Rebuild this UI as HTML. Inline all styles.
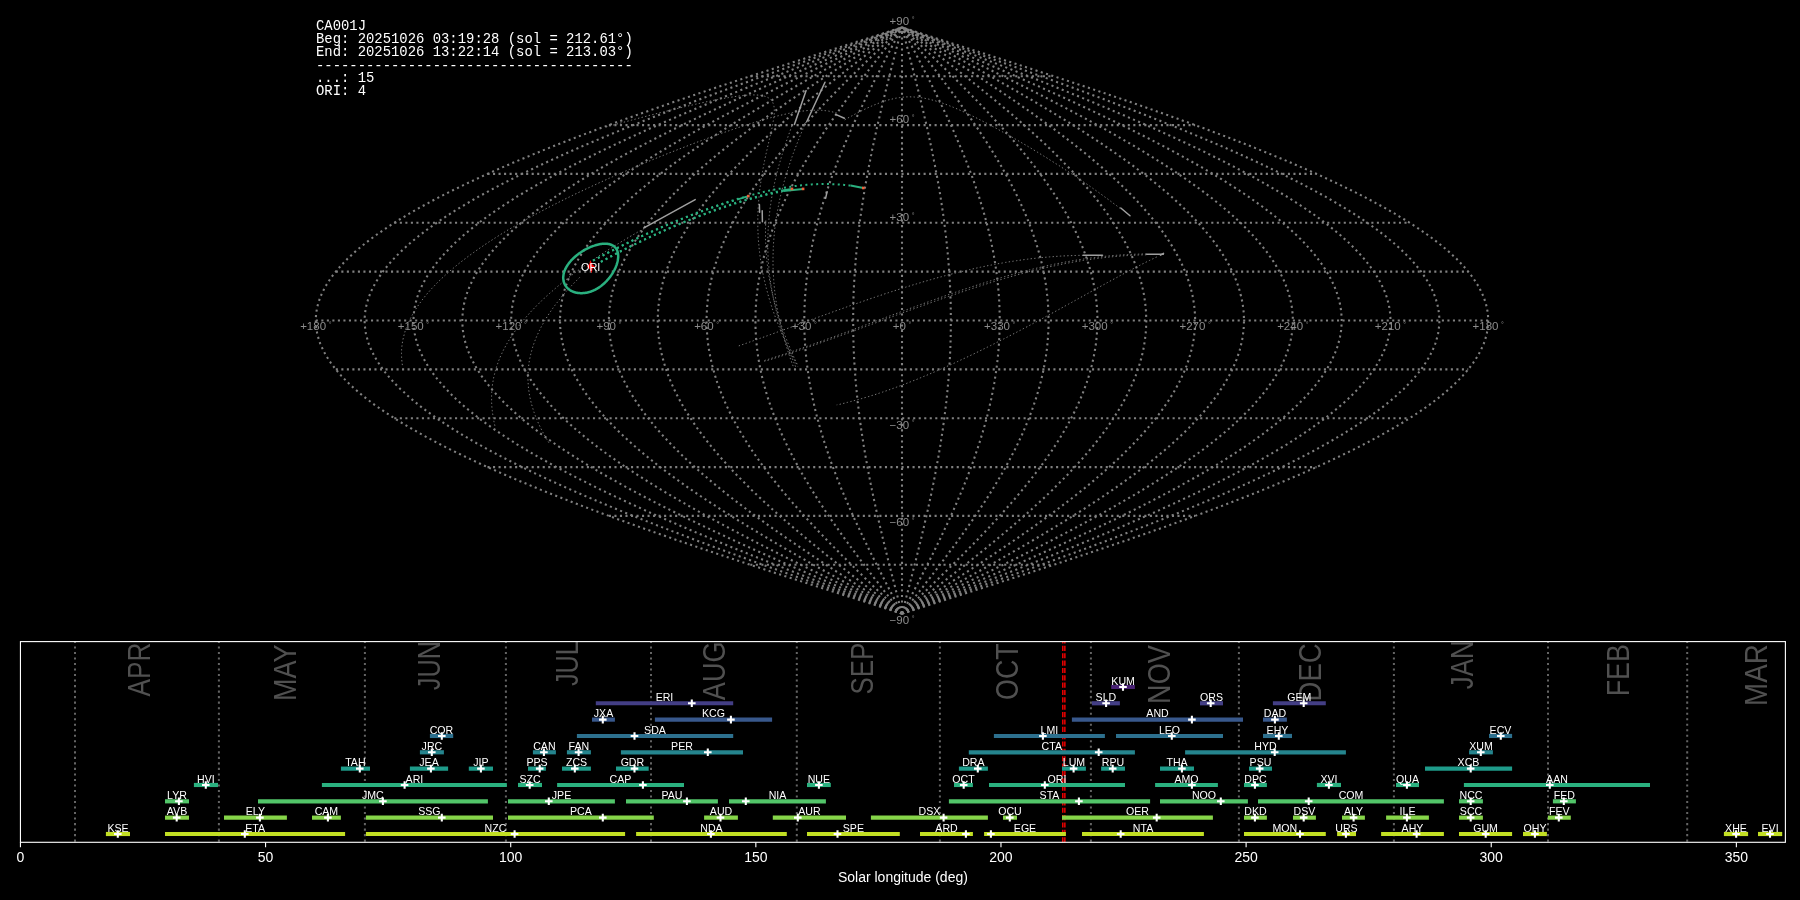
<!DOCTYPE html>
<html><head><meta charset="utf-8"><title>CA001J</title>
<style>html,body{margin:0;padding:0;background:#000;width:1800px;height:900px;overflow:hidden}svg{display:block;will-change:transform}</style>
</head><body><svg width="1800" height="900" viewBox="0 0 1800 900"><g fill="none" stroke="#808080" stroke-width="2.08" stroke-dasharray="2.08 3.44"><path d="M902.0,613.6 912.2,610.4 922.5,607.1 932.7,603.8 942.9,600.6 953.1,597.3 963.3,594.1 973.4,590.8 983.6,587.6 993.7,584.3 1003.8,581.0 1013.9,577.8 1023.9,574.5 1033.9,571.3 1043.8,568.0 1053.7,564.8 1063.6,561.5 1073.4,558.2 1083.2,555.0 1092.9,551.7 1102.5,548.5 1112.1,545.2 1121.6,542.0 1131.1,538.7 1140.4,535.4 1149.7,532.2 1159.0,528.9 1168.1,525.7 1177.2,522.4 1186.2,519.2 1195.1,515.9 1203.9,512.7 1212.6,509.4 1221.3,506.1 1229.8,502.9 1238.2,499.6 1246.6,496.4 1254.8,493.1 1262.9,489.9 1270.9,486.6 1278.8,483.3 1286.6,480.1 1294.3,476.8 1301.8,473.6 1309.2,470.3 1316.5,467.1 1323.7,463.8 1330.7,460.5 1337.6,457.3 1344.4,454.0 1351.1,450.8 1357.6,447.5 1363.9,444.3 1370.2,441.0 1376.3,437.7 1382.2,434.5 1388.0,431.2 1393.6,428.0 1399.1,424.7 1404.5,421.5 1409.7,418.2 1414.7,414.9 1419.6,411.7 1424.3,408.4 1428.9,405.2 1433.3,401.9 1437.5,398.7 1441.6,395.4 1445.5,392.1 1449.3,388.9 1452.9,385.6 1456.3,382.4 1459.5,379.1 1462.6,375.9 1465.5,372.6 1468.2,369.4 1470.8,366.1 1473.2,362.8 1475.4,359.6 1477.5,356.3 1479.3,353.1 1481.0,349.8 1482.5,346.6 1483.9,343.3 1485.0,340.0 1486.0,336.8 1486.8,333.5 1487.4,330.3 1487.9,327.0 1488.1,323.8 1488.2,320.5 1488.1,317.2 1487.9,314.0 1487.4,310.7 1486.8,307.5 1486.0,304.2 1485.0,301.0 1483.9,297.7 1482.5,294.4 1481.0,291.2 1479.3,287.9 1477.5,284.7 1475.4,281.4 1473.2,278.2 1470.8,274.9 1468.2,271.6 1465.5,268.4 1462.6,265.1 1459.5,261.9 1456.3,258.6 1452.9,255.4 1449.3,252.1 1445.5,248.9 1441.6,245.6 1437.5,242.3 1433.3,239.1 1428.9,235.8 1424.3,232.6 1419.6,229.3 1414.7,226.1 1409.7,222.8 1404.5,219.5 1399.1,216.3 1393.6,213.0 1388.0,209.8 1382.2,206.5 1376.3,203.3 1370.2,200.0 1363.9,196.7 1357.6,193.5 1351.1,190.2 1344.4,187.0 1337.6,183.7 1330.7,180.5 1323.7,177.2 1316.5,173.9 1309.2,170.7 1301.8,167.4 1294.3,164.2 1286.6,160.9 1278.8,157.7 1270.9,154.4 1262.9,151.1 1254.8,147.9 1246.6,144.6 1238.2,141.4 1229.8,138.1 1221.3,134.9 1212.6,131.6 1203.9,128.3 1195.1,125.1 1186.2,121.8 1177.2,118.6 1168.1,115.3 1159.0,112.1 1149.7,108.8 1140.4,105.6 1131.1,102.3 1121.6,99.0 1112.1,95.8 1102.5,92.5 1092.9,89.3 1083.2,86.0 1073.4,82.8 1063.6,79.5 1053.7,76.2 1043.8,73.0 1033.9,69.7 1023.9,66.5 1013.9,63.2 1003.8,60.0 993.7,56.7 983.6,53.4 973.4,50.2 963.3,46.9 953.1,43.7 942.9,40.4 932.7,37.2 922.5,33.9 912.2,30.6 902.0,27.4"/><path d="M902.0,613.6 911.4,610.4 920.8,607.1 930.1,603.8 939.5,600.6 948.8,597.3 958.2,594.1 967.5,590.8 976.8,587.6 986.1,584.3 995.3,581.0 1004.5,577.8 1013.7,574.5 1022.9,571.3 1032.0,568.0 1041.1,564.8 1050.1,561.5 1059.1,558.2 1068.1,555.0 1077.0,551.7 1085.8,548.5 1094.6,545.2 1103.3,542.0 1112.0,538.7 1120.6,535.4 1129.1,532.2 1137.6,528.9 1146.0,525.7 1154.3,522.4 1162.5,519.2 1170.7,515.9 1178.8,512.7 1186.8,509.4 1194.7,506.1 1202.5,502.9 1210.2,499.6 1217.9,496.4 1225.4,493.1 1232.8,489.9 1240.2,486.6 1247.4,483.3 1254.5,480.1 1261.6,476.8 1268.5,473.6 1275.3,470.3 1282.0,467.1 1288.6,463.8 1295.0,460.5 1301.3,457.3 1307.6,454.0 1313.6,450.8 1319.6,447.5 1325.5,444.3 1331.2,441.0 1336.7,437.7 1342.2,434.5 1347.5,431.2 1352.7,428.0 1357.7,424.7 1362.6,421.5 1367.4,418.2 1372.0,414.9 1376.5,411.7 1380.8,408.4 1385.0,405.2 1389.0,401.9 1392.9,398.7 1396.7,395.4 1400.2,392.1 1403.7,388.9 1407.0,385.6 1410.1,382.4 1413.1,379.1 1415.9,375.9 1418.6,372.6 1421.1,369.4 1423.4,366.1 1425.6,362.8 1427.6,359.6 1429.5,356.3 1431.2,353.1 1432.8,349.8 1434.1,346.6 1435.4,343.3 1436.4,340.0 1437.3,336.8 1438.1,333.5 1438.6,330.3 1439.0,327.0 1439.3,323.8 1439.4,320.5 1439.3,317.2 1439.0,314.0 1438.6,310.7 1438.1,307.5 1437.3,304.2 1436.4,301.0 1435.4,297.7 1434.1,294.4 1432.8,291.2 1431.2,287.9 1429.5,284.7 1427.6,281.4 1425.6,278.2 1423.4,274.9 1421.1,271.6 1418.6,268.4 1415.9,265.1 1413.1,261.9 1410.1,258.6 1407.0,255.4 1403.7,252.1 1400.2,248.9 1396.7,245.6 1392.9,242.3 1389.0,239.1 1385.0,235.8 1380.8,232.6 1376.5,229.3 1372.0,226.1 1367.4,222.8 1362.6,219.5 1357.7,216.3 1352.7,213.0 1347.5,209.8 1342.2,206.5 1336.7,203.3 1331.2,200.0 1325.5,196.7 1319.6,193.5 1313.6,190.2 1307.6,187.0 1301.3,183.7 1295.0,180.5 1288.6,177.2 1282.0,173.9 1275.3,170.7 1268.5,167.4 1261.6,164.2 1254.5,160.9 1247.4,157.7 1240.2,154.4 1232.8,151.1 1225.4,147.9 1217.9,144.6 1210.2,141.4 1202.5,138.1 1194.7,134.9 1186.8,131.6 1178.8,128.3 1170.7,125.1 1162.5,121.8 1154.3,118.6 1146.0,115.3 1137.6,112.1 1129.1,108.8 1120.6,105.6 1112.0,102.3 1103.3,99.0 1094.6,95.8 1085.8,92.5 1077.0,89.3 1068.1,86.0 1059.1,82.8 1050.1,79.5 1041.1,76.2 1032.0,73.0 1022.9,69.7 1013.7,66.5 1004.5,63.2 995.3,60.0 986.1,56.7 976.8,53.4 967.5,50.2 958.2,46.9 948.8,43.7 939.5,40.4 930.1,37.2 920.8,33.9 911.4,30.6 902.0,27.4"/><path d="M902.0,613.6 910.5,610.4 919.0,607.1 927.6,603.8 936.1,600.6 944.6,597.3 953.1,594.1 961.5,590.8 970.0,587.6 978.4,584.3 986.8,581.0 995.2,577.8 1003.6,574.5 1011.9,571.3 1020.2,568.0 1028.4,564.8 1036.7,561.5 1044.8,558.2 1053.0,555.0 1061.0,551.7 1069.1,548.5 1077.1,545.2 1085.0,542.0 1092.9,538.7 1100.7,535.4 1108.5,532.2 1116.2,528.9 1123.8,525.7 1131.3,522.4 1138.8,519.2 1146.3,515.9 1153.6,512.7 1160.9,509.4 1168.1,506.1 1175.2,502.9 1182.2,499.6 1189.1,496.4 1196.0,493.1 1202.8,489.9 1209.4,486.6 1216.0,483.3 1222.5,480.1 1228.9,476.8 1235.2,473.6 1241.4,470.3 1247.4,467.1 1253.4,463.8 1259.3,460.5 1265.0,457.3 1270.7,454.0 1276.2,450.8 1281.6,447.5 1287.0,444.3 1292.1,441.0 1297.2,437.7 1302.2,434.5 1307.0,431.2 1311.7,428.0 1316.3,424.7 1320.7,421.5 1325.1,418.2 1329.3,414.9 1333.3,411.7 1337.3,408.4 1341.1,405.2 1344.7,401.9 1348.3,398.7 1351.7,395.4 1354.9,392.1 1358.1,388.9 1361.1,385.6 1363.9,382.4 1366.6,379.1 1369.2,375.9 1371.6,372.6 1373.9,369.4 1376.0,366.1 1378.0,362.8 1379.8,359.6 1381.5,356.3 1383.1,353.1 1384.5,349.8 1385.8,346.6 1386.9,343.3 1387.8,340.0 1388.7,336.8 1389.3,333.5 1389.8,330.3 1390.2,327.0 1390.4,323.8 1390.5,320.5 1390.4,317.2 1390.2,314.0 1389.8,310.7 1389.3,307.5 1388.7,304.2 1387.8,301.0 1386.9,297.7 1385.8,294.4 1384.5,291.2 1383.1,287.9 1381.5,284.7 1379.8,281.4 1378.0,278.2 1376.0,274.9 1373.9,271.6 1371.6,268.4 1369.2,265.1 1366.6,261.9 1363.9,258.6 1361.1,255.4 1358.1,252.1 1354.9,248.9 1351.7,245.6 1348.3,242.3 1344.7,239.1 1341.1,235.8 1337.3,232.6 1333.3,229.3 1329.3,226.1 1325.1,222.8 1320.7,219.5 1316.3,216.3 1311.7,213.0 1307.0,209.8 1302.2,206.5 1297.2,203.3 1292.1,200.0 1287.0,196.7 1281.6,193.5 1276.2,190.2 1270.7,187.0 1265.0,183.7 1259.3,180.5 1253.4,177.2 1247.4,173.9 1241.4,170.7 1235.2,167.4 1228.9,164.2 1222.5,160.9 1216.0,157.7 1209.4,154.4 1202.8,151.1 1196.0,147.9 1189.1,144.6 1182.2,141.4 1175.2,138.1 1168.1,134.9 1160.9,131.6 1153.6,128.3 1146.3,125.1 1138.8,121.8 1131.3,118.6 1123.8,115.3 1116.2,112.1 1108.5,108.8 1100.7,105.6 1092.9,102.3 1085.0,99.0 1077.1,95.8 1069.1,92.5 1061.0,89.3 1053.0,86.0 1044.8,82.8 1036.7,79.5 1028.4,76.2 1020.2,73.0 1011.9,69.7 1003.6,66.5 995.2,63.2 986.8,60.0 978.4,56.7 970.0,53.4 961.5,50.2 953.1,46.9 944.6,43.7 936.1,40.4 927.6,37.2 919.0,33.9 910.5,30.6 902.0,27.4"/><path d="M902.0,613.6 909.7,610.4 917.3,607.1 925.0,603.8 932.7,600.6 940.3,597.3 948.0,594.1 955.6,590.8 963.2,587.6 970.8,584.3 978.3,581.0 985.9,577.8 993.4,574.5 1000.9,571.3 1008.4,568.0 1015.8,564.8 1023.2,561.5 1030.5,558.2 1037.9,555.0 1045.1,551.7 1052.4,548.5 1059.6,545.2 1066.7,542.0 1073.8,538.7 1080.8,535.4 1087.8,532.2 1094.7,528.9 1101.6,525.7 1108.4,522.4 1115.2,519.2 1121.8,515.9 1128.4,512.7 1135.0,509.4 1141.5,506.1 1147.9,502.9 1154.2,499.6 1160.4,496.4 1166.6,493.1 1172.7,489.9 1178.7,486.6 1184.6,483.3 1190.4,480.1 1196.2,476.8 1201.9,473.6 1207.4,470.3 1212.9,467.1 1218.3,463.8 1223.6,460.5 1228.7,457.3 1233.8,454.0 1238.8,450.8 1243.7,447.5 1248.5,444.3 1253.1,441.0 1257.7,437.7 1262.2,434.5 1266.5,431.2 1270.7,428.0 1274.9,424.7 1278.9,421.5 1282.8,418.2 1286.5,414.9 1290.2,411.7 1293.7,408.4 1297.2,405.2 1300.5,401.9 1303.7,398.7 1306.7,395.4 1309.7,392.1 1312.5,388.9 1315.2,385.6 1317.7,382.4 1320.1,379.1 1322.5,375.9 1324.6,372.6 1326.7,369.4 1328.6,366.1 1330.4,362.8 1332.1,359.6 1333.6,356.3 1335.0,353.1 1336.3,349.8 1337.4,346.6 1338.4,343.3 1339.3,340.0 1340.0,336.8 1340.6,333.5 1341.1,330.3 1341.4,327.0 1341.6,323.8 1341.7,320.5 1341.6,317.2 1341.4,314.0 1341.1,310.7 1340.6,307.5 1340.0,304.2 1339.3,301.0 1338.4,297.7 1337.4,294.4 1336.3,291.2 1335.0,287.9 1333.6,284.7 1332.1,281.4 1330.4,278.2 1328.6,274.9 1326.7,271.6 1324.6,268.4 1322.5,265.1 1320.1,261.9 1317.7,258.6 1315.2,255.4 1312.5,252.1 1309.7,248.9 1306.7,245.6 1303.7,242.3 1300.5,239.1 1297.2,235.8 1293.7,232.6 1290.2,229.3 1286.5,226.1 1282.8,222.8 1278.9,219.5 1274.9,216.3 1270.7,213.0 1266.5,209.8 1262.2,206.5 1257.7,203.3 1253.1,200.0 1248.5,196.7 1243.7,193.5 1238.8,190.2 1233.8,187.0 1228.7,183.7 1223.6,180.5 1218.3,177.2 1212.9,173.9 1207.4,170.7 1201.9,167.4 1196.2,164.2 1190.4,160.9 1184.6,157.7 1178.7,154.4 1172.7,151.1 1166.6,147.9 1160.4,144.6 1154.2,141.4 1147.9,138.1 1141.5,134.9 1135.0,131.6 1128.4,128.3 1121.8,125.1 1115.2,121.8 1108.4,118.6 1101.6,115.3 1094.7,112.1 1087.8,108.8 1080.8,105.6 1073.8,102.3 1066.7,99.0 1059.6,95.8 1052.4,92.5 1045.1,89.3 1037.9,86.0 1030.5,82.8 1023.2,79.5 1015.8,76.2 1008.4,73.0 1000.9,69.7 993.4,66.5 985.9,63.2 978.3,60.0 970.8,56.7 963.2,53.4 955.6,50.2 948.0,46.9 940.3,43.7 932.7,40.4 925.0,37.2 917.3,33.9 909.7,30.6 902.0,27.4"/><path d="M902.0,613.6 908.8,610.4 915.6,607.1 922.5,603.8 929.3,600.6 936.1,597.3 942.9,594.1 949.6,590.8 956.4,587.6 963.1,584.3 969.9,581.0 976.6,577.8 983.3,574.5 989.9,571.3 996.5,568.0 1003.2,564.8 1009.7,561.5 1016.3,558.2 1022.8,555.0 1029.2,551.7 1035.7,548.5 1042.1,545.2 1048.4,542.0 1054.7,538.7 1061.0,535.4 1067.2,532.2 1073.3,528.9 1079.4,525.7 1085.5,522.4 1091.5,519.2 1097.4,515.9 1103.3,512.7 1109.1,509.4 1114.9,506.1 1120.5,502.9 1126.2,499.6 1131.7,496.4 1137.2,493.1 1142.6,489.9 1147.9,486.6 1153.2,483.3 1158.4,480.1 1163.5,476.8 1168.5,473.6 1173.5,470.3 1178.3,467.1 1183.1,463.8 1187.8,460.5 1192.4,457.3 1197.0,454.0 1201.4,450.8 1205.7,447.5 1210.0,444.3 1214.1,441.0 1218.2,437.7 1222.1,434.5 1226.0,431.2 1229.8,428.0 1233.4,424.7 1237.0,421.5 1240.5,418.2 1243.8,414.9 1247.1,411.7 1250.2,408.4 1253.3,405.2 1256.2,401.9 1259.0,398.7 1261.7,395.4 1264.4,392.1 1266.9,388.9 1269.2,385.6 1271.5,382.4 1273.7,379.1 1275.7,375.9 1277.7,372.6 1279.5,369.4 1281.2,366.1 1282.8,362.8 1284.3,359.6 1285.6,356.3 1286.9,353.1 1288.0,349.8 1289.0,346.6 1289.9,343.3 1290.7,340.0 1291.3,336.8 1291.9,333.5 1292.3,330.3 1292.6,327.0 1292.8,323.8 1292.8,320.5 1292.8,317.2 1292.6,314.0 1292.3,310.7 1291.9,307.5 1291.3,304.2 1290.7,301.0 1289.9,297.7 1289.0,294.4 1288.0,291.2 1286.9,287.9 1285.6,284.7 1284.3,281.4 1282.8,278.2 1281.2,274.9 1279.5,271.6 1277.7,268.4 1275.7,265.1 1273.7,261.9 1271.5,258.6 1269.2,255.4 1266.9,252.1 1264.4,248.9 1261.7,245.6 1259.0,242.3 1256.2,239.1 1253.3,235.8 1250.2,232.6 1247.1,229.3 1243.8,226.1 1240.5,222.8 1237.0,219.5 1233.4,216.3 1229.8,213.0 1226.0,209.8 1222.1,206.5 1218.2,203.3 1214.1,200.0 1210.0,196.7 1205.7,193.5 1201.4,190.2 1197.0,187.0 1192.4,183.7 1187.8,180.5 1183.1,177.2 1178.3,173.9 1173.5,170.7 1168.5,167.4 1163.5,164.2 1158.4,160.9 1153.2,157.7 1147.9,154.4 1142.6,151.1 1137.2,147.9 1131.7,144.6 1126.2,141.4 1120.5,138.1 1114.9,134.9 1109.1,131.6 1103.3,128.3 1097.4,125.1 1091.5,121.8 1085.5,118.6 1079.4,115.3 1073.3,112.1 1067.2,108.8 1061.0,105.6 1054.7,102.3 1048.4,99.0 1042.1,95.8 1035.7,92.5 1029.2,89.3 1022.8,86.0 1016.3,82.8 1009.7,79.5 1003.2,76.2 996.5,73.0 989.9,69.7 983.3,66.5 976.6,63.2 969.9,60.0 963.1,56.7 956.4,53.4 949.6,50.2 942.9,46.9 936.1,43.7 929.3,40.4 922.5,37.2 915.6,33.9 908.8,30.6 902.0,27.4"/><path d="M902.0,613.6 908.0,610.4 913.9,607.1 919.9,603.8 925.9,600.6 931.8,597.3 937.7,594.1 943.7,590.8 949.6,587.6 955.5,584.3 961.4,581.0 967.2,577.8 973.1,574.5 978.9,571.3 984.7,568.0 990.5,564.8 996.3,561.5 1002.0,558.2 1007.7,555.0 1013.3,551.7 1019.0,548.5 1024.5,545.2 1030.1,542.0 1035.6,538.7 1041.1,535.4 1046.5,532.2 1051.9,528.9 1057.2,525.7 1062.5,522.4 1067.8,519.2 1073.0,515.9 1078.1,512.7 1083.2,509.4 1088.2,506.1 1093.2,502.9 1098.1,499.6 1103.0,496.4 1107.8,493.1 1112.5,489.9 1117.2,486.6 1121.8,483.3 1126.3,480.1 1130.8,476.8 1135.2,473.6 1139.5,470.3 1143.8,467.1 1148.0,463.8 1152.1,460.5 1156.1,457.3 1160.1,454.0 1164.0,450.8 1167.8,447.5 1171.5,444.3 1175.1,441.0 1178.7,437.7 1182.1,434.5 1185.5,431.2 1188.8,428.0 1192.0,424.7 1195.1,421.5 1198.1,418.2 1201.1,414.9 1203.9,411.7 1206.7,408.4 1209.4,405.2 1211.9,401.9 1214.4,398.7 1216.8,395.4 1219.1,392.1 1221.2,388.9 1223.3,385.6 1225.3,382.4 1227.2,379.1 1229.0,375.9 1230.7,372.6 1232.3,369.4 1233.8,366.1 1235.2,362.8 1236.5,359.6 1237.7,356.3 1238.8,353.1 1239.8,349.8 1240.6,346.6 1241.4,343.3 1242.1,340.0 1242.7,336.8 1243.1,333.5 1243.5,330.3 1243.8,327.0 1243.9,323.8 1244.0,320.5 1243.9,317.2 1243.8,314.0 1243.5,310.7 1243.1,307.5 1242.7,304.2 1242.1,301.0 1241.4,297.7 1240.6,294.4 1239.8,291.2 1238.8,287.9 1237.7,284.7 1236.5,281.4 1235.2,278.2 1233.8,274.9 1232.3,271.6 1230.7,268.4 1229.0,265.1 1227.2,261.9 1225.3,258.6 1223.3,255.4 1221.2,252.1 1219.1,248.9 1216.8,245.6 1214.4,242.3 1211.9,239.1 1209.4,235.8 1206.7,232.6 1203.9,229.3 1201.1,226.1 1198.1,222.8 1195.1,219.5 1192.0,216.3 1188.8,213.0 1185.5,209.8 1182.1,206.5 1178.7,203.3 1175.1,200.0 1171.5,196.7 1167.8,193.5 1164.0,190.2 1160.1,187.0 1156.1,183.7 1152.1,180.5 1148.0,177.2 1143.8,173.9 1139.5,170.7 1135.2,167.4 1130.8,164.2 1126.3,160.9 1121.8,157.7 1117.2,154.4 1112.5,151.1 1107.8,147.9 1103.0,144.6 1098.1,141.4 1093.2,138.1 1088.2,134.9 1083.2,131.6 1078.1,128.3 1073.0,125.1 1067.8,121.8 1062.5,118.6 1057.2,115.3 1051.9,112.1 1046.5,108.8 1041.1,105.6 1035.6,102.3 1030.1,99.0 1024.5,95.8 1019.0,92.5 1013.3,89.3 1007.7,86.0 1002.0,82.8 996.3,79.5 990.5,76.2 984.7,73.0 978.9,69.7 973.1,66.5 967.2,63.2 961.4,60.0 955.5,56.7 949.6,53.4 943.7,50.2 937.7,46.9 931.8,43.7 925.9,40.4 919.9,37.2 913.9,33.9 908.0,30.6 902.0,27.4"/><path d="M902.0,613.6 907.1,610.4 912.2,607.1 917.3,603.8 922.4,600.6 927.5,597.3 932.6,594.1 937.7,590.8 942.8,587.6 947.9,584.3 952.9,581.0 957.9,577.8 962.9,574.5 967.9,571.3 972.9,568.0 977.9,564.8 982.8,561.5 987.7,558.2 992.6,555.0 997.4,551.7 1002.2,548.5 1007.0,545.2 1011.8,542.0 1016.5,538.7 1021.2,535.4 1025.9,532.2 1030.5,528.9 1035.1,525.7 1039.6,522.4 1044.1,519.2 1048.6,515.9 1053.0,512.7 1057.3,509.4 1061.6,506.1 1065.9,502.9 1070.1,499.6 1074.3,496.4 1078.4,493.1 1082.5,489.9 1086.5,486.6 1090.4,483.3 1094.3,480.1 1098.1,476.8 1101.9,473.6 1105.6,470.3 1109.3,467.1 1112.8,463.8 1116.4,460.5 1119.8,457.3 1123.2,454.0 1126.5,450.8 1129.8,447.5 1133.0,444.3 1136.1,441.0 1139.1,437.7 1142.1,434.5 1145.0,431.2 1147.8,428.0 1150.6,424.7 1153.2,421.5 1155.8,418.2 1158.4,414.9 1160.8,411.7 1163.2,408.4 1165.4,405.2 1167.6,401.9 1169.8,398.7 1171.8,395.4 1173.8,392.1 1175.6,388.9 1177.4,385.6 1179.1,382.4 1180.8,379.1 1182.3,375.9 1183.8,372.6 1185.1,369.4 1186.4,366.1 1187.6,362.8 1188.7,359.6 1189.7,356.3 1190.7,353.1 1191.5,349.8 1192.3,346.6 1192.9,343.3 1193.5,340.0 1194.0,336.8 1194.4,333.5 1194.7,330.3 1194.9,327.0 1195.1,323.8 1195.1,320.5 1195.1,317.2 1194.9,314.0 1194.7,310.7 1194.4,307.5 1194.0,304.2 1193.5,301.0 1192.9,297.7 1192.3,294.4 1191.5,291.2 1190.7,287.9 1189.7,284.7 1188.7,281.4 1187.6,278.2 1186.4,274.9 1185.1,271.6 1183.8,268.4 1182.3,265.1 1180.8,261.9 1179.1,258.6 1177.4,255.4 1175.6,252.1 1173.8,248.9 1171.8,245.6 1169.8,242.3 1167.6,239.1 1165.4,235.8 1163.2,232.6 1160.8,229.3 1158.4,226.1 1155.8,222.8 1153.2,219.5 1150.6,216.3 1147.8,213.0 1145.0,209.8 1142.1,206.5 1139.1,203.3 1136.1,200.0 1133.0,196.7 1129.8,193.5 1126.5,190.2 1123.2,187.0 1119.8,183.7 1116.4,180.5 1112.8,177.2 1109.3,173.9 1105.6,170.7 1101.9,167.4 1098.1,164.2 1094.3,160.9 1090.4,157.7 1086.5,154.4 1082.5,151.1 1078.4,147.9 1074.3,144.6 1070.1,141.4 1065.9,138.1 1061.6,134.9 1057.3,131.6 1053.0,128.3 1048.6,125.1 1044.1,121.8 1039.6,118.6 1035.1,115.3 1030.5,112.1 1025.9,108.8 1021.2,105.6 1016.5,102.3 1011.8,99.0 1007.0,95.8 1002.2,92.5 997.4,89.3 992.6,86.0 987.7,82.8 982.8,79.5 977.9,76.2 972.9,73.0 967.9,69.7 962.9,66.5 957.9,63.2 952.9,60.0 947.9,56.7 942.8,53.4 937.7,50.2 932.6,46.9 927.5,43.7 922.4,40.4 917.3,37.2 912.2,33.9 907.1,30.6 902.0,27.4"/><path d="M902.0,613.6 906.3,610.4 910.5,607.1 914.8,603.8 919.0,600.6 923.3,597.3 927.5,594.1 931.8,590.8 936.0,587.6 940.2,584.3 944.4,581.0 948.6,577.8 952.8,574.5 956.9,571.3 961.1,568.0 965.2,564.8 969.3,561.5 973.4,558.2 977.5,555.0 981.5,551.7 985.5,548.5 989.5,545.2 993.5,542.0 997.4,538.7 1001.3,535.4 1005.2,532.2 1009.1,528.9 1012.9,525.7 1016.7,522.4 1020.4,519.2 1024.1,515.9 1027.8,512.7 1031.4,509.4 1035.0,506.1 1038.6,502.9 1042.1,499.6 1045.6,496.4 1049.0,493.1 1052.4,489.9 1055.7,486.6 1059.0,483.3 1062.2,480.1 1065.4,476.8 1068.6,473.6 1071.7,470.3 1074.7,467.1 1077.7,463.8 1080.6,460.5 1083.5,457.3 1086.3,454.0 1089.1,450.8 1091.8,447.5 1094.5,444.3 1097.1,441.0 1099.6,437.7 1102.1,434.5 1104.5,431.2 1106.9,428.0 1109.1,424.7 1111.4,421.5 1113.5,418.2 1115.6,414.9 1117.7,411.7 1119.6,408.4 1121.5,405.2 1123.4,401.9 1125.1,398.7 1126.8,395.4 1128.5,392.1 1130.0,388.9 1131.5,385.6 1133.0,382.4 1134.3,379.1 1135.6,375.9 1136.8,372.6 1137.9,369.4 1139.0,366.1 1140.0,362.8 1140.9,359.6 1141.8,356.3 1142.5,353.1 1143.3,349.8 1143.9,346.6 1144.4,343.3 1144.9,340.0 1145.3,336.8 1145.7,333.5 1145.9,330.3 1146.1,327.0 1146.2,323.8 1146.3,320.5 1146.2,317.2 1146.1,314.0 1145.9,310.7 1145.7,307.5 1145.3,304.2 1144.9,301.0 1144.4,297.7 1143.9,294.4 1143.3,291.2 1142.5,287.9 1141.8,284.7 1140.9,281.4 1140.0,278.2 1139.0,274.9 1137.9,271.6 1136.8,268.4 1135.6,265.1 1134.3,261.9 1133.0,258.6 1131.5,255.4 1130.0,252.1 1128.5,248.9 1126.8,245.6 1125.1,242.3 1123.4,239.1 1121.5,235.8 1119.6,232.6 1117.7,229.3 1115.6,226.1 1113.5,222.8 1111.4,219.5 1109.1,216.3 1106.9,213.0 1104.5,209.8 1102.1,206.5 1099.6,203.3 1097.1,200.0 1094.5,196.7 1091.8,193.5 1089.1,190.2 1086.3,187.0 1083.5,183.7 1080.6,180.5 1077.7,177.2 1074.7,173.9 1071.7,170.7 1068.6,167.4 1065.4,164.2 1062.2,160.9 1059.0,157.7 1055.7,154.4 1052.4,151.1 1049.0,147.9 1045.6,144.6 1042.1,141.4 1038.6,138.1 1035.0,134.9 1031.4,131.6 1027.8,128.3 1024.1,125.1 1020.4,121.8 1016.7,118.6 1012.9,115.3 1009.1,112.1 1005.2,108.8 1001.3,105.6 997.4,102.3 993.5,99.0 989.5,95.8 985.5,92.5 981.5,89.3 977.5,86.0 973.4,82.8 969.3,79.5 965.2,76.2 961.1,73.0 956.9,69.7 952.8,66.5 948.6,63.2 944.4,60.0 940.2,56.7 936.0,53.4 931.8,50.2 927.5,46.9 923.3,43.7 919.0,40.4 914.8,37.2 910.5,33.9 906.3,30.6 902.0,27.4"/><path d="M902.0,613.6 905.4,610.4 908.8,607.1 912.2,603.8 915.6,600.6 919.0,597.3 922.4,594.1 925.8,590.8 929.2,587.6 932.6,584.3 935.9,581.0 939.3,577.8 942.6,574.5 946.0,571.3 949.3,568.0 952.6,564.8 955.9,561.5 959.1,558.2 962.4,555.0 965.6,551.7 968.8,548.5 972.0,545.2 975.2,542.0 978.4,538.7 981.5,535.4 984.6,532.2 987.7,528.9 990.7,525.7 993.7,522.4 996.7,519.2 999.7,515.9 1002.6,512.7 1005.5,509.4 1008.4,506.1 1011.3,502.9 1014.1,499.6 1016.9,496.4 1019.6,493.1 1022.3,489.9 1025.0,486.6 1027.6,483.3 1030.2,480.1 1032.8,476.8 1035.3,473.6 1037.7,470.3 1040.2,467.1 1042.6,463.8 1044.9,460.5 1047.2,457.3 1049.5,454.0 1051.7,450.8 1053.9,447.5 1056.0,444.3 1058.1,441.0 1060.1,437.7 1062.1,434.5 1064.0,431.2 1065.9,428.0 1067.7,424.7 1069.5,421.5 1071.2,418.2 1072.9,414.9 1074.5,411.7 1076.1,408.4 1077.6,405.2 1079.1,401.9 1080.5,398.7 1081.9,395.4 1083.2,392.1 1084.4,388.9 1085.6,385.6 1086.8,382.4 1087.8,379.1 1088.9,375.9 1089.8,372.6 1090.7,369.4 1091.6,366.1 1092.4,362.8 1093.1,359.6 1093.8,356.3 1094.4,353.1 1095.0,349.8 1095.5,346.6 1096.0,343.3 1096.3,340.0 1096.7,336.8 1096.9,333.5 1097.1,330.3 1097.3,327.0 1097.4,323.8 1097.4,320.5 1097.4,317.2 1097.3,314.0 1097.1,310.7 1096.9,307.5 1096.7,304.2 1096.3,301.0 1096.0,297.7 1095.5,294.4 1095.0,291.2 1094.4,287.9 1093.8,284.7 1093.1,281.4 1092.4,278.2 1091.6,274.9 1090.7,271.6 1089.8,268.4 1088.9,265.1 1087.8,261.9 1086.8,258.6 1085.6,255.4 1084.4,252.1 1083.2,248.9 1081.9,245.6 1080.5,242.3 1079.1,239.1 1077.6,235.8 1076.1,232.6 1074.5,229.3 1072.9,226.1 1071.2,222.8 1069.5,219.5 1067.7,216.3 1065.9,213.0 1064.0,209.8 1062.1,206.5 1060.1,203.3 1058.1,200.0 1056.0,196.7 1053.9,193.5 1051.7,190.2 1049.5,187.0 1047.2,183.7 1044.9,180.5 1042.6,177.2 1040.2,173.9 1037.7,170.7 1035.3,167.4 1032.8,164.2 1030.2,160.9 1027.6,157.7 1025.0,154.4 1022.3,151.1 1019.6,147.9 1016.9,144.6 1014.1,141.4 1011.3,138.1 1008.4,134.9 1005.5,131.6 1002.6,128.3 999.7,125.1 996.7,121.8 993.7,118.6 990.7,115.3 987.7,112.1 984.6,108.8 981.5,105.6 978.4,102.3 975.2,99.0 972.0,95.8 968.8,92.5 965.6,89.3 962.4,86.0 959.1,82.8 955.9,79.5 952.6,76.2 949.3,73.0 946.0,69.7 942.6,66.5 939.3,63.2 935.9,60.0 932.6,56.7 929.2,53.4 925.8,50.2 922.4,46.9 919.0,43.7 915.6,40.4 912.2,37.2 908.8,33.9 905.4,30.6 902.0,27.4"/><path d="M902.0,613.6 904.6,610.4 907.1,607.1 909.7,603.8 912.2,600.6 914.8,597.3 917.3,594.1 919.9,590.8 922.4,587.6 924.9,584.3 927.4,581.0 930.0,577.8 932.5,574.5 935.0,571.3 937.5,568.0 939.9,564.8 942.4,561.5 944.8,558.2 947.3,555.0 949.7,551.7 952.1,548.5 954.5,545.2 956.9,542.0 959.3,538.7 961.6,535.4 963.9,532.2 966.2,528.9 968.5,525.7 970.8,522.4 973.1,519.2 975.3,515.9 977.5,512.7 979.7,509.4 981.8,506.1 984.0,502.9 986.1,499.6 988.1,496.4 990.2,493.1 992.2,489.9 994.2,486.6 996.2,483.3 998.1,480.1 1000.1,476.8 1002.0,473.6 1003.8,470.3 1005.6,467.1 1007.4,463.8 1009.2,460.5 1010.9,457.3 1012.6,454.0 1014.3,450.8 1015.9,447.5 1017.5,444.3 1019.0,441.0 1020.6,437.7 1022.1,434.5 1023.5,431.2 1024.9,428.0 1026.3,424.7 1027.6,421.5 1028.9,418.2 1030.2,414.9 1031.4,411.7 1032.6,408.4 1033.7,405.2 1034.8,401.9 1035.9,398.7 1036.9,395.4 1037.9,392.1 1038.8,388.9 1039.7,385.6 1040.6,382.4 1041.4,379.1 1042.2,375.9 1042.9,372.6 1043.6,369.4 1044.2,366.1 1044.8,362.8 1045.4,359.6 1045.9,356.3 1046.3,353.1 1046.8,349.8 1047.1,346.6 1047.5,343.3 1047.8,340.0 1048.0,336.8 1048.2,333.5 1048.4,330.3 1048.5,327.0 1048.5,323.8 1048.6,320.5 1048.5,317.2 1048.5,314.0 1048.4,310.7 1048.2,307.5 1048.0,304.2 1047.8,301.0 1047.5,297.7 1047.1,294.4 1046.8,291.2 1046.3,287.9 1045.9,284.7 1045.4,281.4 1044.8,278.2 1044.2,274.9 1043.6,271.6 1042.9,268.4 1042.2,265.1 1041.4,261.9 1040.6,258.6 1039.7,255.4 1038.8,252.1 1037.9,248.9 1036.9,245.6 1035.9,242.3 1034.8,239.1 1033.7,235.8 1032.6,232.6 1031.4,229.3 1030.2,226.1 1028.9,222.8 1027.6,219.5 1026.3,216.3 1024.9,213.0 1023.5,209.8 1022.1,206.5 1020.6,203.3 1019.0,200.0 1017.5,196.7 1015.9,193.5 1014.3,190.2 1012.6,187.0 1010.9,183.7 1009.2,180.5 1007.4,177.2 1005.6,173.9 1003.8,170.7 1002.0,167.4 1000.1,164.2 998.1,160.9 996.2,157.7 994.2,154.4 992.2,151.1 990.2,147.9 988.1,144.6 986.1,141.4 984.0,138.1 981.8,134.9 979.7,131.6 977.5,128.3 975.3,125.1 973.1,121.8 970.8,118.6 968.5,115.3 966.2,112.1 963.9,108.8 961.6,105.6 959.3,102.3 956.9,99.0 954.5,95.8 952.1,92.5 949.7,89.3 947.3,86.0 944.8,82.8 942.4,79.5 939.9,76.2 937.5,73.0 935.0,69.7 932.5,66.5 930.0,63.2 927.4,60.0 924.9,56.7 922.4,53.4 919.9,50.2 917.3,46.9 914.8,43.7 912.2,40.4 909.7,37.2 907.1,33.9 904.6,30.6 902.0,27.4"/><path d="M902.0,613.6 903.7,610.4 905.4,607.1 907.1,603.8 908.8,600.6 910.5,597.3 912.2,594.1 913.9,590.8 915.6,587.6 917.3,584.3 919.0,581.0 920.6,577.8 922.3,574.5 924.0,571.3 925.6,568.0 927.3,564.8 928.9,561.5 930.6,558.2 932.2,555.0 933.8,551.7 935.4,548.5 937.0,545.2 938.6,542.0 940.2,538.7 941.7,535.4 943.3,532.2 944.8,528.9 946.4,525.7 947.9,522.4 949.4,519.2 950.9,515.9 952.3,512.7 953.8,509.4 955.2,506.1 956.6,502.9 958.0,499.6 959.4,496.4 960.8,493.1 962.2,489.9 963.5,486.6 964.8,483.3 966.1,480.1 967.4,476.8 968.6,473.6 969.9,470.3 971.1,467.1 972.3,463.8 973.5,460.5 974.6,457.3 975.7,454.0 976.8,450.8 977.9,447.5 979.0,444.3 980.0,441.0 981.0,437.7 982.0,434.5 983.0,431.2 983.9,428.0 984.9,424.7 985.7,421.5 986.6,418.2 987.5,414.9 988.3,411.7 989.1,408.4 989.8,405.2 990.5,401.9 991.3,398.7 991.9,395.4 992.6,392.1 993.2,388.9 993.8,385.6 994.4,382.4 994.9,379.1 995.4,375.9 995.9,372.6 996.4,369.4 996.8,366.1 997.2,362.8 997.6,359.6 997.9,356.3 998.2,353.1 998.5,349.8 998.8,346.6 999.0,343.3 999.2,340.0 999.3,336.8 999.5,333.5 999.6,330.3 999.6,327.0 999.7,323.8 999.7,320.5 999.7,317.2 999.6,314.0 999.6,310.7 999.5,307.5 999.3,304.2 999.2,301.0 999.0,297.7 998.8,294.4 998.5,291.2 998.2,287.9 997.9,284.7 997.6,281.4 997.2,278.2 996.8,274.9 996.4,271.6 995.9,268.4 995.4,265.1 994.9,261.9 994.4,258.6 993.8,255.4 993.2,252.1 992.6,248.9 991.9,245.6 991.3,242.3 990.5,239.1 989.8,235.8 989.1,232.6 988.3,229.3 987.5,226.1 986.6,222.8 985.7,219.5 984.9,216.3 983.9,213.0 983.0,209.8 982.0,206.5 981.0,203.3 980.0,200.0 979.0,196.7 977.9,193.5 976.8,190.2 975.7,187.0 974.6,183.7 973.5,180.5 972.3,177.2 971.1,173.9 969.9,170.7 968.6,167.4 967.4,164.2 966.1,160.9 964.8,157.7 963.5,154.4 962.2,151.1 960.8,147.9 959.4,144.6 958.0,141.4 956.6,138.1 955.2,134.9 953.8,131.6 952.3,128.3 950.9,125.1 949.4,121.8 947.9,118.6 946.4,115.3 944.8,112.1 943.3,108.8 941.7,105.6 940.2,102.3 938.6,99.0 937.0,95.8 935.4,92.5 933.8,89.3 932.2,86.0 930.6,82.8 928.9,79.5 927.3,76.2 925.6,73.0 924.0,69.7 922.3,66.5 920.6,63.2 919.0,60.0 917.3,56.7 915.6,53.4 913.9,50.2 912.2,46.9 910.5,43.7 908.8,40.4 907.1,37.2 905.4,33.9 903.7,30.6 902.0,27.4"/><path d="M902.0,613.6 902.9,610.4 903.7,607.1 904.6,603.8 905.4,600.6 906.3,597.3 907.1,594.1 908.0,590.8 908.8,587.6 909.6,584.3 910.5,581.0 911.3,577.8 912.2,574.5 913.0,571.3 913.8,568.0 914.6,564.8 915.5,561.5 916.3,558.2 917.1,555.0 917.9,551.7 918.7,548.5 919.5,545.2 920.3,542.0 921.1,538.7 921.9,535.4 922.6,532.2 923.4,528.9 924.2,525.7 924.9,522.4 925.7,519.2 926.4,515.9 927.2,512.7 927.9,509.4 928.6,506.1 929.3,502.9 930.0,499.6 930.7,496.4 931.4,493.1 932.1,489.9 932.7,486.6 933.4,483.3 934.0,480.1 934.7,476.8 935.3,473.6 935.9,470.3 936.5,467.1 937.1,463.8 937.7,460.5 938.3,457.3 938.9,454.0 939.4,450.8 940.0,447.5 940.5,444.3 941.0,441.0 941.5,437.7 942.0,434.5 942.5,431.2 943.0,428.0 943.4,424.7 943.9,421.5 944.3,418.2 944.7,414.9 945.1,411.7 945.5,408.4 945.9,405.2 946.3,401.9 946.6,398.7 947.0,395.4 947.3,392.1 947.6,388.9 947.9,385.6 948.2,382.4 948.5,379.1 948.7,375.9 949.0,372.6 949.2,369.4 949.4,366.1 949.6,362.8 949.8,359.6 950.0,356.3 950.1,353.1 950.3,349.8 950.4,346.6 950.5,343.3 950.6,340.0 950.7,336.8 950.7,333.5 950.8,330.3 950.8,327.0 950.8,323.8 950.9,320.5 950.8,317.2 950.8,314.0 950.8,310.7 950.7,307.5 950.7,304.2 950.6,301.0 950.5,297.7 950.4,294.4 950.3,291.2 950.1,287.9 950.0,284.7 949.8,281.4 949.6,278.2 949.4,274.9 949.2,271.6 949.0,268.4 948.7,265.1 948.5,261.9 948.2,258.6 947.9,255.4 947.6,252.1 947.3,248.9 947.0,245.6 946.6,242.3 946.3,239.1 945.9,235.8 945.5,232.6 945.1,229.3 944.7,226.1 944.3,222.8 943.9,219.5 943.4,216.3 943.0,213.0 942.5,209.8 942.0,206.5 941.5,203.3 941.0,200.0 940.5,196.7 940.0,193.5 939.4,190.2 938.9,187.0 938.3,183.7 937.7,180.5 937.1,177.2 936.5,173.9 935.9,170.7 935.3,167.4 934.7,164.2 934.0,160.9 933.4,157.7 932.7,154.4 932.1,151.1 931.4,147.9 930.7,144.6 930.0,141.4 929.3,138.1 928.6,134.9 927.9,131.6 927.2,128.3 926.4,125.1 925.7,121.8 924.9,118.6 924.2,115.3 923.4,112.1 922.6,108.8 921.9,105.6 921.1,102.3 920.3,99.0 919.5,95.8 918.7,92.5 917.9,89.3 917.1,86.0 916.3,82.8 915.5,79.5 914.6,76.2 913.8,73.0 913.0,69.7 912.2,66.5 911.3,63.2 910.5,60.0 909.6,56.7 908.8,53.4 908.0,50.2 907.1,46.9 906.3,43.7 905.4,40.4 904.6,37.2 903.7,33.9 902.9,30.6 902.0,27.4"/><path d="M902.0,613.6 902.0,610.4 902.0,607.1 902.0,603.8 902.0,600.6 902.0,597.3 902.0,594.1 902.0,590.8 902.0,587.6 902.0,584.3 902.0,581.0 902.0,577.8 902.0,574.5 902.0,571.3 902.0,568.0 902.0,564.8 902.0,561.5 902.0,558.2 902.0,555.0 902.0,551.7 902.0,548.5 902.0,545.2 902.0,542.0 902.0,538.7 902.0,535.4 902.0,532.2 902.0,528.9 902.0,525.7 902.0,522.4 902.0,519.2 902.0,515.9 902.0,512.7 902.0,509.4 902.0,506.1 902.0,502.9 902.0,499.6 902.0,496.4 902.0,493.1 902.0,489.9 902.0,486.6 902.0,483.3 902.0,480.1 902.0,476.8 902.0,473.6 902.0,470.3 902.0,467.1 902.0,463.8 902.0,460.5 902.0,457.3 902.0,454.0 902.0,450.8 902.0,447.5 902.0,444.3 902.0,441.0 902.0,437.7 902.0,434.5 902.0,431.2 902.0,428.0 902.0,424.7 902.0,421.5 902.0,418.2 902.0,414.9 902.0,411.7 902.0,408.4 902.0,405.2 902.0,401.9 902.0,398.7 902.0,395.4 902.0,392.1 902.0,388.9 902.0,385.6 902.0,382.4 902.0,379.1 902.0,375.9 902.0,372.6 902.0,369.4 902.0,366.1 902.0,362.8 902.0,359.6 902.0,356.3 902.0,353.1 902.0,349.8 902.0,346.6 902.0,343.3 902.0,340.0 902.0,336.8 902.0,333.5 902.0,330.3 902.0,327.0 902.0,323.8 902.0,320.5 902.0,317.2 902.0,314.0 902.0,310.7 902.0,307.5 902.0,304.2 902.0,301.0 902.0,297.7 902.0,294.4 902.0,291.2 902.0,287.9 902.0,284.7 902.0,281.4 902.0,278.2 902.0,274.9 902.0,271.6 902.0,268.4 902.0,265.1 902.0,261.9 902.0,258.6 902.0,255.4 902.0,252.1 902.0,248.9 902.0,245.6 902.0,242.3 902.0,239.1 902.0,235.8 902.0,232.6 902.0,229.3 902.0,226.1 902.0,222.8 902.0,219.5 902.0,216.3 902.0,213.0 902.0,209.8 902.0,206.5 902.0,203.3 902.0,200.0 902.0,196.7 902.0,193.5 902.0,190.2 902.0,187.0 902.0,183.7 902.0,180.5 902.0,177.2 902.0,173.9 902.0,170.7 902.0,167.4 902.0,164.2 902.0,160.9 902.0,157.7 902.0,154.4 902.0,151.1 902.0,147.9 902.0,144.6 902.0,141.4 902.0,138.1 902.0,134.9 902.0,131.6 902.0,128.3 902.0,125.1 902.0,121.8 902.0,118.6 902.0,115.3 902.0,112.1 902.0,108.8 902.0,105.6 902.0,102.3 902.0,99.0 902.0,95.8 902.0,92.5 902.0,89.3 902.0,86.0 902.0,82.8 902.0,79.5 902.0,76.2 902.0,73.0 902.0,69.7 902.0,66.5 902.0,63.2 902.0,60.0 902.0,56.7 902.0,53.4 902.0,50.2 902.0,46.9 902.0,43.7 902.0,40.4 902.0,37.2 902.0,33.9 902.0,30.6 902.0,27.4"/><path d="M902.0,613.6 901.1,610.4 900.3,607.1 899.4,603.8 898.6,600.6 897.7,597.3 896.9,594.1 896.0,590.8 895.2,587.6 894.4,584.3 893.5,581.0 892.7,577.8 891.8,574.5 891.0,571.3 890.2,568.0 889.4,564.8 888.5,561.5 887.7,558.2 886.9,555.0 886.1,551.7 885.3,548.5 884.5,545.2 883.7,542.0 882.9,538.7 882.1,535.4 881.4,532.2 880.6,528.9 879.8,525.7 879.1,522.4 878.3,519.2 877.6,515.9 876.8,512.7 876.1,509.4 875.4,506.1 874.7,502.9 874.0,499.6 873.3,496.4 872.6,493.1 871.9,489.9 871.3,486.6 870.6,483.3 870.0,480.1 869.3,476.8 868.7,473.6 868.1,470.3 867.5,467.1 866.9,463.8 866.3,460.5 865.7,457.3 865.1,454.0 864.6,450.8 864.0,447.5 863.5,444.3 863.0,441.0 862.5,437.7 862.0,434.5 861.5,431.2 861.0,428.0 860.6,424.7 860.1,421.5 859.7,418.2 859.3,414.9 858.9,411.7 858.5,408.4 858.1,405.2 857.7,401.9 857.4,398.7 857.0,395.4 856.7,392.1 856.4,388.9 856.1,385.6 855.8,382.4 855.5,379.1 855.3,375.9 855.0,372.6 854.8,369.4 854.6,366.1 854.4,362.8 854.2,359.6 854.0,356.3 853.9,353.1 853.7,349.8 853.6,346.6 853.5,343.3 853.4,340.0 853.3,336.8 853.3,333.5 853.2,330.3 853.2,327.0 853.2,323.8 853.1,320.5 853.2,317.2 853.2,314.0 853.2,310.7 853.3,307.5 853.3,304.2 853.4,301.0 853.5,297.7 853.6,294.4 853.7,291.2 853.9,287.9 854.0,284.7 854.2,281.4 854.4,278.2 854.6,274.9 854.8,271.6 855.0,268.4 855.3,265.1 855.5,261.9 855.8,258.6 856.1,255.4 856.4,252.1 856.7,248.9 857.0,245.6 857.4,242.3 857.7,239.1 858.1,235.8 858.5,232.6 858.9,229.3 859.3,226.1 859.7,222.8 860.1,219.5 860.6,216.3 861.0,213.0 861.5,209.8 862.0,206.5 862.5,203.3 863.0,200.0 863.5,196.7 864.0,193.5 864.6,190.2 865.1,187.0 865.7,183.7 866.3,180.5 866.9,177.2 867.5,173.9 868.1,170.7 868.7,167.4 869.3,164.2 870.0,160.9 870.6,157.7 871.3,154.4 871.9,151.1 872.6,147.9 873.3,144.6 874.0,141.4 874.7,138.1 875.4,134.9 876.1,131.6 876.8,128.3 877.6,125.1 878.3,121.8 879.1,118.6 879.8,115.3 880.6,112.1 881.4,108.8 882.1,105.6 882.9,102.3 883.7,99.0 884.5,95.8 885.3,92.5 886.1,89.3 886.9,86.0 887.7,82.8 888.5,79.5 889.4,76.2 890.2,73.0 891.0,69.7 891.8,66.5 892.7,63.2 893.5,60.0 894.4,56.7 895.2,53.4 896.0,50.2 896.9,46.9 897.7,43.7 898.6,40.4 899.4,37.2 900.3,33.9 901.1,30.6 902.0,27.4"/><path d="M902.0,613.6 900.3,610.4 898.6,607.1 896.9,603.8 895.2,600.6 893.5,597.3 891.8,594.1 890.1,590.8 888.4,587.6 886.7,584.3 885.0,581.0 883.4,577.8 881.7,574.5 880.0,571.3 878.4,568.0 876.7,564.8 875.1,561.5 873.4,558.2 871.8,555.0 870.2,551.7 868.6,548.5 867.0,545.2 865.4,542.0 863.8,538.7 862.3,535.4 860.7,532.2 859.2,528.9 857.6,525.7 856.1,522.4 854.6,519.2 853.1,515.9 851.7,512.7 850.2,509.4 848.8,506.1 847.4,502.9 846.0,499.6 844.6,496.4 843.2,493.1 841.8,489.9 840.5,486.6 839.2,483.3 837.9,480.1 836.6,476.8 835.4,473.6 834.1,470.3 832.9,467.1 831.7,463.8 830.5,460.5 829.4,457.3 828.3,454.0 827.2,450.8 826.1,447.5 825.0,444.3 824.0,441.0 823.0,437.7 822.0,434.5 821.0,431.2 820.1,428.0 819.1,424.7 818.3,421.5 817.4,418.2 816.5,414.9 815.7,411.7 814.9,408.4 814.2,405.2 813.5,401.9 812.7,398.7 812.1,395.4 811.4,392.1 810.8,388.9 810.2,385.6 809.6,382.4 809.1,379.1 808.6,375.9 808.1,372.6 807.6,369.4 807.2,366.1 806.8,362.8 806.4,359.6 806.1,356.3 805.8,353.1 805.5,349.8 805.2,346.6 805.0,343.3 804.8,340.0 804.7,336.8 804.5,333.5 804.4,330.3 804.4,327.0 804.3,323.8 804.3,320.5 804.3,317.2 804.4,314.0 804.4,310.7 804.5,307.5 804.7,304.2 804.8,301.0 805.0,297.7 805.2,294.4 805.5,291.2 805.8,287.9 806.1,284.7 806.4,281.4 806.8,278.2 807.2,274.9 807.6,271.6 808.1,268.4 808.6,265.1 809.1,261.9 809.6,258.6 810.2,255.4 810.8,252.1 811.4,248.9 812.1,245.6 812.7,242.3 813.5,239.1 814.2,235.8 814.9,232.6 815.7,229.3 816.5,226.1 817.4,222.8 818.3,219.5 819.1,216.3 820.1,213.0 821.0,209.8 822.0,206.5 823.0,203.3 824.0,200.0 825.0,196.7 826.1,193.5 827.2,190.2 828.3,187.0 829.4,183.7 830.5,180.5 831.7,177.2 832.9,173.9 834.1,170.7 835.4,167.4 836.6,164.2 837.9,160.9 839.2,157.7 840.5,154.4 841.8,151.1 843.2,147.9 844.6,144.6 846.0,141.4 847.4,138.1 848.8,134.9 850.2,131.6 851.7,128.3 853.1,125.1 854.6,121.8 856.1,118.6 857.6,115.3 859.2,112.1 860.7,108.8 862.3,105.6 863.8,102.3 865.4,99.0 867.0,95.8 868.6,92.5 870.2,89.3 871.8,86.0 873.4,82.8 875.1,79.5 876.7,76.2 878.4,73.0 880.0,69.7 881.7,66.5 883.4,63.2 885.0,60.0 886.7,56.7 888.4,53.4 890.1,50.2 891.8,46.9 893.5,43.7 895.2,40.4 896.9,37.2 898.6,33.9 900.3,30.6 902.0,27.4"/><path d="M902.0,613.6 899.4,610.4 896.9,607.1 894.3,603.8 891.8,600.6 889.2,597.3 886.7,594.1 884.1,590.8 881.6,587.6 879.1,584.3 876.6,581.0 874.0,577.8 871.5,574.5 869.0,571.3 866.5,568.0 864.1,564.8 861.6,561.5 859.2,558.2 856.7,555.0 854.3,551.7 851.9,548.5 849.5,545.2 847.1,542.0 844.7,538.7 842.4,535.4 840.1,532.2 837.8,528.9 835.5,525.7 833.2,522.4 830.9,519.2 828.7,515.9 826.5,512.7 824.3,509.4 822.2,506.1 820.0,502.9 817.9,499.6 815.9,496.4 813.8,493.1 811.8,489.9 809.8,486.6 807.8,483.3 805.9,480.1 803.9,476.8 802.0,473.6 800.2,470.3 798.4,467.1 796.6,463.8 794.8,460.5 793.1,457.3 791.4,454.0 789.7,450.8 788.1,447.5 786.5,444.3 785.0,441.0 783.4,437.7 781.9,434.5 780.5,431.2 779.1,428.0 777.7,424.7 776.4,421.5 775.1,418.2 773.8,414.9 772.6,411.7 771.4,408.4 770.3,405.2 769.2,401.9 768.1,398.7 767.1,395.4 766.1,392.1 765.2,388.9 764.3,385.6 763.4,382.4 762.6,379.1 761.8,375.9 761.1,372.6 760.4,369.4 759.8,366.1 759.2,362.8 758.6,359.6 758.1,356.3 757.7,353.1 757.2,349.8 756.9,346.6 756.5,343.3 756.2,340.0 756.0,336.8 755.8,333.5 755.6,330.3 755.5,327.0 755.5,323.8 755.4,320.5 755.5,317.2 755.5,314.0 755.6,310.7 755.8,307.5 756.0,304.2 756.2,301.0 756.5,297.7 756.9,294.4 757.2,291.2 757.7,287.9 758.1,284.7 758.6,281.4 759.2,278.2 759.8,274.9 760.4,271.6 761.1,268.4 761.8,265.1 762.6,261.9 763.4,258.6 764.3,255.4 765.2,252.1 766.1,248.9 767.1,245.6 768.1,242.3 769.2,239.1 770.3,235.8 771.4,232.6 772.6,229.3 773.8,226.1 775.1,222.8 776.4,219.5 777.7,216.3 779.1,213.0 780.5,209.8 781.9,206.5 783.4,203.3 785.0,200.0 786.5,196.7 788.1,193.5 789.7,190.2 791.4,187.0 793.1,183.7 794.8,180.5 796.6,177.2 798.4,173.9 800.2,170.7 802.0,167.4 803.9,164.2 805.9,160.9 807.8,157.7 809.8,154.4 811.8,151.1 813.8,147.9 815.9,144.6 817.9,141.4 820.0,138.1 822.2,134.9 824.3,131.6 826.5,128.3 828.7,125.1 830.9,121.8 833.2,118.6 835.5,115.3 837.8,112.1 840.1,108.8 842.4,105.6 844.7,102.3 847.1,99.0 849.5,95.8 851.9,92.5 854.3,89.3 856.7,86.0 859.2,82.8 861.6,79.5 864.1,76.2 866.5,73.0 869.0,69.7 871.5,66.5 874.0,63.2 876.6,60.0 879.1,56.7 881.6,53.4 884.1,50.2 886.7,46.9 889.2,43.7 891.8,40.4 894.3,37.2 896.9,33.9 899.4,30.6 902.0,27.4"/><path d="M902.0,613.6 898.6,610.4 895.2,607.1 891.8,603.8 888.4,600.6 885.0,597.3 881.6,594.1 878.2,590.8 874.8,587.6 871.4,584.3 868.1,581.0 864.7,577.8 861.4,574.5 858.0,571.3 854.7,568.0 851.4,564.8 848.1,561.5 844.9,558.2 841.6,555.0 838.4,551.7 835.2,548.5 832.0,545.2 828.8,542.0 825.6,538.7 822.5,535.4 819.4,532.2 816.3,528.9 813.3,525.7 810.3,522.4 807.3,519.2 804.3,515.9 801.4,512.7 798.5,509.4 795.6,506.1 792.7,502.9 789.9,499.6 787.1,496.4 784.4,493.1 781.7,489.9 779.0,486.6 776.4,483.3 773.8,480.1 771.2,476.8 768.7,473.6 766.3,470.3 763.8,467.1 761.4,463.8 759.1,460.5 756.8,457.3 754.5,454.0 752.3,450.8 750.1,447.5 748.0,444.3 745.9,441.0 743.9,437.7 741.9,434.5 740.0,431.2 738.1,428.0 736.3,424.7 734.5,421.5 732.8,418.2 731.1,414.9 729.5,411.7 727.9,408.4 726.4,405.2 724.9,401.9 723.5,398.7 722.1,395.4 720.8,392.1 719.6,388.9 718.4,385.6 717.2,382.4 716.2,379.1 715.1,375.9 714.2,372.6 713.3,369.4 712.4,366.1 711.6,362.8 710.9,359.6 710.2,356.3 709.6,353.1 709.0,349.8 708.5,346.6 708.0,343.3 707.7,340.0 707.3,336.8 707.1,333.5 706.9,330.3 706.7,327.0 706.6,323.8 706.6,320.5 706.6,317.2 706.7,314.0 706.9,310.7 707.1,307.5 707.3,304.2 707.7,301.0 708.0,297.7 708.5,294.4 709.0,291.2 709.6,287.9 710.2,284.7 710.9,281.4 711.6,278.2 712.4,274.9 713.3,271.6 714.2,268.4 715.1,265.1 716.2,261.9 717.2,258.6 718.4,255.4 719.6,252.1 720.8,248.9 722.1,245.6 723.5,242.3 724.9,239.1 726.4,235.8 727.9,232.6 729.5,229.3 731.1,226.1 732.8,222.8 734.5,219.5 736.3,216.3 738.1,213.0 740.0,209.8 741.9,206.5 743.9,203.3 745.9,200.0 748.0,196.7 750.1,193.5 752.3,190.2 754.5,187.0 756.8,183.7 759.1,180.5 761.4,177.2 763.8,173.9 766.3,170.7 768.7,167.4 771.2,164.2 773.8,160.9 776.4,157.7 779.0,154.4 781.7,151.1 784.4,147.9 787.1,144.6 789.9,141.4 792.7,138.1 795.6,134.9 798.5,131.6 801.4,128.3 804.3,125.1 807.3,121.8 810.3,118.6 813.3,115.3 816.3,112.1 819.4,108.8 822.5,105.6 825.6,102.3 828.8,99.0 832.0,95.8 835.2,92.5 838.4,89.3 841.6,86.0 844.9,82.8 848.1,79.5 851.4,76.2 854.7,73.0 858.0,69.7 861.4,66.5 864.7,63.2 868.1,60.0 871.4,56.7 874.8,53.4 878.2,50.2 881.6,46.9 885.0,43.7 888.4,40.4 891.8,37.2 895.2,33.9 898.6,30.6 902.0,27.4"/><path d="M902.0,613.6 897.7,610.4 893.5,607.1 889.2,603.8 885.0,600.6 880.7,597.3 876.5,594.1 872.2,590.8 868.0,587.6 863.8,584.3 859.6,581.0 855.4,577.8 851.2,574.5 847.1,571.3 842.9,568.0 838.8,564.8 834.7,561.5 830.6,558.2 826.5,555.0 822.5,551.7 818.5,548.5 814.5,545.2 810.5,542.0 806.6,538.7 802.7,535.4 798.8,532.2 794.9,528.9 791.1,525.7 787.3,522.4 783.6,519.2 779.9,515.9 776.2,512.7 772.6,509.4 769.0,506.1 765.4,502.9 761.9,499.6 758.4,496.4 755.0,493.1 751.6,489.9 748.3,486.6 745.0,483.3 741.8,480.1 738.6,476.8 735.4,473.6 732.3,470.3 729.3,467.1 726.3,463.8 723.4,460.5 720.5,457.3 717.7,454.0 714.9,450.8 712.2,447.5 709.5,444.3 706.9,441.0 704.4,437.7 701.9,434.5 699.5,431.2 697.1,428.0 694.9,424.7 692.6,421.5 690.5,418.2 688.4,414.9 686.3,411.7 684.4,408.4 682.5,405.2 680.6,401.9 678.9,398.7 677.2,395.4 675.5,392.1 674.0,388.9 672.5,385.6 671.0,382.4 669.7,379.1 668.4,375.9 667.2,372.6 666.1,369.4 665.0,366.1 664.0,362.8 663.1,359.6 662.2,356.3 661.5,353.1 660.7,349.8 660.1,346.6 659.6,343.3 659.1,340.0 658.7,336.8 658.3,333.5 658.1,330.3 657.9,327.0 657.8,323.8 657.7,320.5 657.8,317.2 657.9,314.0 658.1,310.7 658.3,307.5 658.7,304.2 659.1,301.0 659.6,297.7 660.1,294.4 660.7,291.2 661.5,287.9 662.2,284.7 663.1,281.4 664.0,278.2 665.0,274.9 666.1,271.6 667.2,268.4 668.4,265.1 669.7,261.9 671.0,258.6 672.5,255.4 674.0,252.1 675.5,248.9 677.2,245.6 678.9,242.3 680.6,239.1 682.5,235.8 684.4,232.6 686.3,229.3 688.4,226.1 690.5,222.8 692.6,219.5 694.9,216.3 697.1,213.0 699.5,209.8 701.9,206.5 704.4,203.3 706.9,200.0 709.5,196.7 712.2,193.5 714.9,190.2 717.7,187.0 720.5,183.7 723.4,180.5 726.3,177.2 729.3,173.9 732.3,170.7 735.4,167.4 738.6,164.2 741.8,160.9 745.0,157.7 748.3,154.4 751.6,151.1 755.0,147.9 758.4,144.6 761.9,141.4 765.4,138.1 769.0,134.9 772.6,131.6 776.2,128.3 779.9,125.1 783.6,121.8 787.3,118.6 791.1,115.3 794.9,112.1 798.8,108.8 802.7,105.6 806.6,102.3 810.5,99.0 814.5,95.8 818.5,92.5 822.5,89.3 826.5,86.0 830.6,82.8 834.7,79.5 838.8,76.2 842.9,73.0 847.1,69.7 851.2,66.5 855.4,63.2 859.6,60.0 863.8,56.7 868.0,53.4 872.2,50.2 876.5,46.9 880.7,43.7 885.0,40.4 889.2,37.2 893.5,33.9 897.7,30.6 902.0,27.4"/><path d="M902.0,613.6 896.9,610.4 891.8,607.1 886.7,603.8 881.6,600.6 876.5,597.3 871.4,594.1 866.3,590.8 861.2,587.6 856.1,584.3 851.1,581.0 846.1,577.8 841.1,574.5 836.1,571.3 831.1,568.0 826.1,564.8 821.2,561.5 816.3,558.2 811.4,555.0 806.6,551.7 801.8,548.5 797.0,545.2 792.2,542.0 787.5,538.7 782.8,535.4 778.1,532.2 773.5,528.9 768.9,525.7 764.4,522.4 759.9,519.2 755.4,515.9 751.0,512.7 746.7,509.4 742.4,506.1 738.1,502.9 733.9,499.6 729.7,496.4 725.6,493.1 721.5,489.9 717.5,486.6 713.6,483.3 709.7,480.1 705.9,476.8 702.1,473.6 698.4,470.3 694.7,467.1 691.2,463.8 687.6,460.5 684.2,457.3 680.8,454.0 677.5,450.8 674.2,447.5 671.0,444.3 667.9,441.0 664.9,437.7 661.9,434.5 659.0,431.2 656.2,428.0 653.4,424.7 650.8,421.5 648.2,418.2 645.6,414.9 643.2,411.7 640.8,408.4 638.6,405.2 636.4,401.9 634.2,398.7 632.2,395.4 630.2,392.1 628.4,388.9 626.6,385.6 624.9,382.4 623.2,379.1 621.7,375.9 620.2,372.6 618.9,369.4 617.6,366.1 616.4,362.8 615.3,359.6 614.3,356.3 613.3,353.1 612.5,349.8 611.7,346.6 611.1,343.3 610.5,340.0 610.0,336.8 609.6,333.5 609.3,330.3 609.1,327.0 608.9,323.8 608.9,320.5 608.9,317.2 609.1,314.0 609.3,310.7 609.6,307.5 610.0,304.2 610.5,301.0 611.1,297.7 611.7,294.4 612.5,291.2 613.3,287.9 614.3,284.7 615.3,281.4 616.4,278.2 617.6,274.9 618.9,271.6 620.2,268.4 621.7,265.1 623.2,261.9 624.9,258.6 626.6,255.4 628.4,252.1 630.2,248.9 632.2,245.6 634.2,242.3 636.4,239.1 638.6,235.8 640.8,232.6 643.2,229.3 645.6,226.1 648.2,222.8 650.8,219.5 653.4,216.3 656.2,213.0 659.0,209.8 661.9,206.5 664.9,203.3 667.9,200.0 671.0,196.7 674.2,193.5 677.5,190.2 680.8,187.0 684.2,183.7 687.6,180.5 691.2,177.2 694.7,173.9 698.4,170.7 702.1,167.4 705.9,164.2 709.7,160.9 713.6,157.7 717.5,154.4 721.5,151.1 725.6,147.9 729.7,144.6 733.9,141.4 738.1,138.1 742.4,134.9 746.7,131.6 751.0,128.3 755.4,125.1 759.9,121.8 764.4,118.6 768.9,115.3 773.5,112.1 778.1,108.8 782.8,105.6 787.5,102.3 792.2,99.0 797.0,95.8 801.8,92.5 806.6,89.3 811.4,86.0 816.3,82.8 821.2,79.5 826.1,76.2 831.1,73.0 836.1,69.7 841.1,66.5 846.1,63.2 851.1,60.0 856.1,56.7 861.2,53.4 866.3,50.2 871.4,46.9 876.5,43.7 881.6,40.4 886.7,37.2 891.8,33.9 896.9,30.6 902.0,27.4"/><path d="M902.0,613.6 896.0,610.4 890.1,607.1 884.1,603.8 878.1,600.6 872.2,597.3 866.3,594.1 860.3,590.8 854.4,587.6 848.5,584.3 842.6,581.0 836.8,577.8 830.9,574.5 825.1,571.3 819.3,568.0 813.5,564.8 807.7,561.5 802.0,558.2 796.3,555.0 790.7,551.7 785.0,548.5 779.5,545.2 773.9,542.0 768.4,538.7 762.9,535.4 757.5,532.2 752.1,528.9 746.8,525.7 741.5,522.4 736.2,519.2 731.0,515.9 725.9,512.7 720.8,509.4 715.8,506.1 710.8,502.9 705.9,499.6 701.0,496.4 696.2,493.1 691.5,489.9 686.8,486.6 682.2,483.3 677.7,480.1 673.2,476.8 668.8,473.6 664.5,470.3 660.2,467.1 656.0,463.8 651.9,460.5 647.9,457.3 643.9,454.0 640.0,450.8 636.2,447.5 632.5,444.3 628.9,441.0 625.3,437.7 621.9,434.5 618.5,431.2 615.2,428.0 612.0,424.7 608.9,421.5 605.9,418.2 602.9,414.9 600.1,411.7 597.3,408.4 594.6,405.2 592.1,401.9 589.6,398.7 587.2,395.4 584.9,392.1 582.8,388.9 580.7,385.6 578.7,382.4 576.8,379.1 575.0,375.9 573.3,372.6 571.7,369.4 570.2,366.1 568.8,362.8 567.5,359.6 566.3,356.3 565.2,353.1 564.2,349.8 563.4,346.6 562.6,343.3 561.9,340.0 561.3,336.8 560.9,333.5 560.5,330.3 560.2,327.0 560.1,323.8 560.0,320.5 560.1,317.2 560.2,314.0 560.5,310.7 560.9,307.5 561.3,304.2 561.9,301.0 562.6,297.7 563.4,294.4 564.2,291.2 565.2,287.9 566.3,284.7 567.5,281.4 568.8,278.2 570.2,274.9 571.7,271.6 573.3,268.4 575.0,265.1 576.8,261.9 578.7,258.6 580.7,255.4 582.8,252.1 584.9,248.9 587.2,245.6 589.6,242.3 592.1,239.1 594.6,235.8 597.3,232.6 600.1,229.3 602.9,226.1 605.9,222.8 608.9,219.5 612.0,216.3 615.2,213.0 618.5,209.8 621.9,206.5 625.3,203.3 628.9,200.0 632.5,196.7 636.2,193.5 640.0,190.2 643.9,187.0 647.9,183.7 651.9,180.5 656.0,177.2 660.2,173.9 664.5,170.7 668.8,167.4 673.2,164.2 677.7,160.9 682.2,157.7 686.8,154.4 691.5,151.1 696.2,147.9 701.0,144.6 705.9,141.4 710.8,138.1 715.8,134.9 720.8,131.6 725.9,128.3 731.0,125.1 736.2,121.8 741.5,118.6 746.8,115.3 752.1,112.1 757.5,108.8 762.9,105.6 768.4,102.3 773.9,99.0 779.5,95.8 785.0,92.5 790.7,89.3 796.3,86.0 802.0,82.8 807.7,79.5 813.5,76.2 819.3,73.0 825.1,69.7 830.9,66.5 836.8,63.2 842.6,60.0 848.5,56.7 854.4,53.4 860.3,50.2 866.3,46.9 872.2,43.7 878.1,40.4 884.1,37.2 890.1,33.9 896.0,30.6 902.0,27.4"/><path d="M902.0,613.6 895.2,610.4 888.4,607.1 881.5,603.8 874.7,600.6 867.9,597.3 861.1,594.1 854.4,590.8 847.6,587.6 840.9,584.3 834.1,581.0 827.4,577.8 820.7,574.5 814.1,571.3 807.5,568.0 800.8,564.8 794.3,561.5 787.7,558.2 781.2,555.0 774.8,551.7 768.3,548.5 761.9,545.2 755.6,542.0 749.3,538.7 743.0,535.4 736.8,532.2 730.7,528.9 724.6,525.7 718.5,522.4 712.5,519.2 706.6,515.9 700.7,512.7 694.9,509.4 689.1,506.1 683.5,502.9 677.8,499.6 672.3,496.4 666.8,493.1 661.4,489.9 656.1,486.6 650.8,483.3 645.6,480.1 640.5,476.8 635.5,473.6 630.5,470.3 625.7,467.1 620.9,463.8 616.2,460.5 611.6,457.3 607.0,454.0 602.6,450.8 598.3,447.5 594.0,444.3 589.9,441.0 585.8,437.7 581.9,434.5 578.0,431.2 574.2,428.0 570.6,424.7 567.0,421.5 563.5,418.2 560.2,414.9 556.9,411.7 553.8,408.4 550.7,405.2 547.8,401.9 545.0,398.7 542.3,395.4 539.6,392.1 537.1,388.9 534.8,385.6 532.5,382.4 530.3,379.1 528.3,375.9 526.3,372.6 524.5,369.4 522.8,366.1 521.2,362.8 519.7,359.6 518.4,356.3 517.1,353.1 516.0,349.8 515.0,346.6 514.1,343.3 513.3,340.0 512.7,336.8 512.1,333.5 511.7,330.3 511.4,327.0 511.2,323.8 511.2,320.5 511.2,317.2 511.4,314.0 511.7,310.7 512.1,307.5 512.7,304.2 513.3,301.0 514.1,297.7 515.0,294.4 516.0,291.2 517.1,287.9 518.4,284.7 519.7,281.4 521.2,278.2 522.8,274.9 524.5,271.6 526.3,268.4 528.3,265.1 530.3,261.9 532.5,258.6 534.8,255.4 537.1,252.1 539.6,248.9 542.3,245.6 545.0,242.3 547.8,239.1 550.7,235.8 553.8,232.6 556.9,229.3 560.2,226.1 563.5,222.8 567.0,219.5 570.6,216.3 574.2,213.0 578.0,209.8 581.9,206.5 585.8,203.3 589.9,200.0 594.0,196.7 598.3,193.5 602.6,190.2 607.0,187.0 611.6,183.7 616.2,180.5 620.9,177.2 625.7,173.9 630.5,170.7 635.5,167.4 640.5,164.2 645.6,160.9 650.8,157.7 656.1,154.4 661.4,151.1 666.8,147.9 672.3,144.6 677.8,141.4 683.5,138.1 689.1,134.9 694.9,131.6 700.7,128.3 706.6,125.1 712.5,121.8 718.5,118.6 724.6,115.3 730.7,112.1 736.8,108.8 743.0,105.6 749.3,102.3 755.6,99.0 761.9,95.8 768.3,92.5 774.8,89.3 781.2,86.0 787.7,82.8 794.3,79.5 800.8,76.2 807.5,73.0 814.1,69.7 820.7,66.5 827.4,63.2 834.1,60.0 840.9,56.7 847.6,53.4 854.4,50.2 861.1,46.9 867.9,43.7 874.7,40.4 881.5,37.2 888.4,33.9 895.2,30.6 902.0,27.4"/><path d="M902.0,613.6 894.3,610.4 886.7,607.1 879.0,603.8 871.3,600.6 863.7,597.3 856.0,594.1 848.4,590.8 840.8,587.6 833.2,584.3 825.7,581.0 818.1,577.8 810.6,574.5 803.1,571.3 795.6,568.0 788.2,564.8 780.8,561.5 773.5,558.2 766.1,555.0 758.9,551.7 751.6,548.5 744.4,545.2 737.3,542.0 730.2,538.7 723.2,535.4 716.2,532.2 709.3,528.9 702.4,525.7 695.6,522.4 688.8,519.2 682.2,515.9 675.6,512.7 669.0,509.4 662.5,506.1 656.1,502.9 649.8,499.6 643.6,496.4 637.4,493.1 631.3,489.9 625.3,486.6 619.4,483.3 613.6,480.1 607.8,476.8 602.1,473.6 596.6,470.3 591.1,467.1 585.7,463.8 580.4,460.5 575.3,457.3 570.2,454.0 565.2,450.8 560.3,447.5 555.5,444.3 550.9,441.0 546.3,437.7 541.8,434.5 537.5,431.2 533.3,428.0 529.1,424.7 525.1,421.5 521.2,418.2 517.5,414.9 513.8,411.7 510.3,408.4 506.8,405.2 503.5,401.9 500.3,398.7 497.3,395.4 494.3,392.1 491.5,388.9 488.8,385.6 486.3,382.4 483.9,379.1 481.5,375.9 479.4,372.6 477.3,369.4 475.4,366.1 473.6,362.8 471.9,359.6 470.4,356.3 469.0,353.1 467.7,349.8 466.6,346.6 465.6,343.3 464.7,340.0 464.0,336.8 463.4,333.5 462.9,330.3 462.6,327.0 462.4,323.8 462.3,320.5 462.4,317.2 462.6,314.0 462.9,310.7 463.4,307.5 464.0,304.2 464.7,301.0 465.6,297.7 466.6,294.4 467.7,291.2 469.0,287.9 470.4,284.7 471.9,281.4 473.6,278.2 475.4,274.9 477.3,271.6 479.4,268.4 481.5,265.1 483.9,261.9 486.3,258.6 488.8,255.4 491.5,252.1 494.3,248.9 497.3,245.6 500.3,242.3 503.5,239.1 506.8,235.8 510.3,232.6 513.8,229.3 517.5,226.1 521.2,222.8 525.1,219.5 529.1,216.3 533.3,213.0 537.5,209.8 541.8,206.5 546.3,203.3 550.9,200.0 555.5,196.7 560.3,193.5 565.2,190.2 570.2,187.0 575.3,183.7 580.4,180.5 585.7,177.2 591.1,173.9 596.6,170.7 602.1,167.4 607.8,164.2 613.6,160.9 619.4,157.7 625.3,154.4 631.3,151.1 637.4,147.9 643.6,144.6 649.8,141.4 656.1,138.1 662.5,134.9 669.0,131.6 675.6,128.3 682.2,125.1 688.8,121.8 695.6,118.6 702.4,115.3 709.3,112.1 716.2,108.8 723.2,105.6 730.2,102.3 737.3,99.0 744.4,95.8 751.6,92.5 758.9,89.3 766.1,86.0 773.5,82.8 780.8,79.5 788.2,76.2 795.6,73.0 803.1,69.7 810.6,66.5 818.1,63.2 825.7,60.0 833.2,56.7 840.8,53.4 848.4,50.2 856.0,46.9 863.7,43.7 871.3,40.4 879.0,37.2 886.7,33.9 894.3,30.6 902.0,27.4"/><path d="M902.0,613.6 893.5,610.4 885.0,607.1 876.4,603.8 867.9,600.6 859.4,597.3 850.9,594.1 842.5,590.8 834.0,587.6 825.6,584.3 817.2,581.0 808.8,577.8 800.4,574.5 792.1,571.3 783.8,568.0 775.6,564.8 767.3,561.5 759.2,558.2 751.0,555.0 743.0,551.7 734.9,548.5 726.9,545.2 719.0,542.0 711.1,538.7 703.3,535.4 695.5,532.2 687.8,528.9 680.2,525.7 672.7,522.4 665.2,519.2 657.7,515.9 650.4,512.7 643.1,509.4 635.9,506.1 628.8,502.9 621.8,499.6 614.9,496.4 608.0,493.1 601.2,489.9 594.6,486.6 588.0,483.3 581.5,480.1 575.1,476.8 568.8,473.6 562.6,470.3 556.6,467.1 550.6,463.8 544.7,460.5 539.0,457.3 533.3,454.0 527.8,450.8 522.4,447.5 517.0,444.3 511.9,441.0 506.8,437.7 501.8,434.5 497.0,431.2 492.3,428.0 487.7,424.7 483.3,421.5 478.9,418.2 474.7,414.9 470.7,411.7 466.7,408.4 462.9,405.2 459.3,401.9 455.7,398.7 452.3,395.4 449.1,392.1 445.9,388.9 442.9,385.6 440.1,382.4 437.4,379.1 434.8,375.9 432.4,372.6 430.1,369.4 428.0,366.1 426.0,362.8 424.2,359.6 422.5,356.3 420.9,353.1 419.5,349.8 418.2,346.6 417.1,343.3 416.2,340.0 415.3,336.8 414.7,333.5 414.2,330.3 413.8,327.0 413.6,323.8 413.5,320.5 413.6,317.2 413.8,314.0 414.2,310.7 414.7,307.5 415.3,304.2 416.2,301.0 417.1,297.7 418.2,294.4 419.5,291.2 420.9,287.9 422.5,284.7 424.2,281.4 426.0,278.2 428.0,274.9 430.1,271.6 432.4,268.4 434.8,265.1 437.4,261.9 440.1,258.6 442.9,255.4 445.9,252.1 449.1,248.9 452.3,245.6 455.7,242.3 459.3,239.1 462.9,235.8 466.7,232.6 470.7,229.3 474.7,226.1 478.9,222.8 483.3,219.5 487.7,216.3 492.3,213.0 497.0,209.8 501.8,206.5 506.8,203.3 511.9,200.0 517.0,196.7 522.4,193.5 527.8,190.2 533.3,187.0 539.0,183.7 544.7,180.5 550.6,177.2 556.6,173.9 562.6,170.7 568.8,167.4 575.1,164.2 581.5,160.9 588.0,157.7 594.6,154.4 601.2,151.1 608.0,147.9 614.9,144.6 621.8,141.4 628.8,138.1 635.9,134.9 643.1,131.6 650.4,128.3 657.7,125.1 665.2,121.8 672.7,118.6 680.2,115.3 687.8,112.1 695.5,108.8 703.3,105.6 711.1,102.3 719.0,99.0 726.9,95.8 734.9,92.5 743.0,89.3 751.0,86.0 759.2,82.8 767.3,79.5 775.6,76.2 783.8,73.0 792.1,69.7 800.4,66.5 808.8,63.2 817.2,60.0 825.6,56.7 834.0,53.4 842.5,50.2 850.9,46.9 859.4,43.7 867.9,40.4 876.4,37.2 885.0,33.9 893.5,30.6 902.0,27.4"/><path d="M902.0,613.6 892.6,610.4 883.2,607.1 873.9,603.8 864.5,600.6 855.2,597.3 845.8,594.1 836.5,590.8 827.2,587.6 817.9,584.3 808.7,581.0 799.5,577.8 790.3,574.5 781.1,571.3 772.0,568.0 762.9,564.8 753.9,561.5 744.9,558.2 735.9,555.0 727.0,551.7 718.2,548.5 709.4,545.2 700.7,542.0 692.0,538.7 683.4,535.4 674.9,532.2 666.4,528.9 658.0,525.7 649.7,522.4 641.5,519.2 633.3,515.9 625.2,512.7 617.2,509.4 609.3,506.1 601.5,502.9 593.8,499.6 586.1,496.4 578.6,493.1 571.2,489.9 563.8,486.6 556.6,483.3 549.5,480.1 542.4,476.8 535.5,473.6 528.7,470.3 522.0,467.1 515.4,463.8 509.0,460.5 502.7,457.3 496.4,454.0 490.4,450.8 484.4,447.5 478.5,444.3 472.8,441.0 467.3,437.7 461.8,434.5 456.5,431.2 451.3,428.0 446.3,424.7 441.4,421.5 436.6,418.2 432.0,414.9 427.5,411.7 423.2,408.4 419.0,405.2 415.0,401.9 411.1,398.7 407.3,395.4 403.8,392.1 400.3,388.9 397.0,385.6 393.9,382.4 390.9,379.1 388.1,375.9 385.4,372.6 382.9,369.4 380.6,366.1 378.4,362.8 376.4,359.6 374.5,356.3 372.8,353.1 371.2,349.8 369.9,346.6 368.6,343.3 367.6,340.0 366.7,336.8 365.9,333.5 365.4,330.3 365.0,327.0 364.7,323.8 364.6,320.5 364.7,317.2 365.0,314.0 365.4,310.7 365.9,307.5 366.7,304.2 367.6,301.0 368.6,297.7 369.9,294.4 371.2,291.2 372.8,287.9 374.5,284.7 376.4,281.4 378.4,278.2 380.6,274.9 382.9,271.6 385.4,268.4 388.1,265.1 390.9,261.9 393.9,258.6 397.0,255.4 400.3,252.1 403.8,248.9 407.3,245.6 411.1,242.3 415.0,239.1 419.0,235.8 423.2,232.6 427.5,229.3 432.0,226.1 436.6,222.8 441.4,219.5 446.3,216.3 451.3,213.0 456.5,209.8 461.8,206.5 467.3,203.3 472.8,200.0 478.5,196.7 484.4,193.5 490.4,190.2 496.4,187.0 502.7,183.7 509.0,180.5 515.4,177.2 522.0,173.9 528.7,170.7 535.5,167.4 542.4,164.2 549.5,160.9 556.6,157.7 563.8,154.4 571.2,151.1 578.6,147.9 586.1,144.6 593.8,141.4 601.5,138.1 609.3,134.9 617.2,131.6 625.2,128.3 633.3,125.1 641.5,121.8 649.7,118.6 658.0,115.3 666.4,112.1 674.9,108.8 683.4,105.6 692.0,102.3 700.7,99.0 709.4,95.8 718.2,92.5 727.0,89.3 735.9,86.0 744.9,82.8 753.9,79.5 762.9,76.2 772.0,73.0 781.1,69.7 790.3,66.5 799.5,63.2 808.7,60.0 817.9,56.7 827.2,53.4 836.5,50.2 845.8,46.9 855.2,43.7 864.5,40.4 873.9,37.2 883.2,33.9 892.6,30.6 902.0,27.4"/><path d="M902.0,613.6 891.8,610.4 881.5,607.1 871.3,603.8 861.1,600.6 850.9,597.3 840.7,594.1 830.6,590.8 820.4,587.6 810.3,584.3 800.2,581.0 790.1,577.8 780.1,574.5 770.1,571.3 760.2,568.0 750.3,564.8 740.4,561.5 730.6,558.2 720.8,555.0 711.1,551.7 701.5,548.5 691.9,545.2 682.4,542.0 672.9,538.7 663.6,535.4 654.3,532.2 645.0,528.9 635.9,525.7 626.8,522.4 617.8,519.2 608.9,515.9 600.1,512.7 591.4,509.4 582.7,506.1 574.2,502.9 565.8,499.6 557.4,496.4 549.2,493.1 541.1,489.9 533.1,486.6 525.2,483.3 517.4,480.1 509.7,476.8 502.2,473.6 494.8,470.3 487.5,467.1 480.3,463.8 473.3,460.5 466.4,457.3 459.6,454.0 452.9,450.8 446.4,447.5 440.1,444.3 433.8,441.0 427.7,437.7 421.8,434.5 416.0,431.2 410.4,428.0 404.9,424.7 399.5,421.5 394.3,418.2 389.3,414.9 384.4,411.7 379.7,408.4 375.1,405.2 370.7,401.9 366.5,398.7 362.4,395.4 358.5,392.1 354.7,388.9 351.1,385.6 347.7,382.4 344.5,379.1 341.4,375.9 338.5,372.6 335.8,369.4 333.2,366.1 330.8,362.8 328.6,359.6 326.5,356.3 324.7,353.1 323.0,349.8 321.5,346.6 320.1,343.3 319.0,340.0 318.0,336.8 317.2,333.5 316.6,330.3 316.1,327.0 315.9,323.8 315.8,320.5 315.9,317.2 316.1,314.0 316.6,310.7 317.2,307.5 318.0,304.2 319.0,301.0 320.1,297.7 321.5,294.4 323.0,291.2 324.7,287.9 326.5,284.7 328.6,281.4 330.8,278.2 333.2,274.9 335.8,271.6 338.5,268.4 341.4,265.1 344.5,261.9 347.7,258.6 351.1,255.4 354.7,252.1 358.5,248.9 362.4,245.6 366.5,242.3 370.7,239.1 375.1,235.8 379.7,232.6 384.4,229.3 389.3,226.1 394.3,222.8 399.5,219.5 404.9,216.3 410.4,213.0 416.0,209.8 421.8,206.5 427.7,203.3 433.8,200.0 440.1,196.7 446.4,193.5 452.9,190.2 459.6,187.0 466.4,183.7 473.3,180.5 480.3,177.2 487.5,173.9 494.8,170.7 502.2,167.4 509.7,164.2 517.4,160.9 525.2,157.7 533.1,154.4 541.1,151.1 549.2,147.9 557.4,144.6 565.8,141.4 574.2,138.1 582.7,134.9 591.4,131.6 600.1,128.3 608.9,125.1 617.8,121.8 626.8,118.6 635.9,115.3 645.0,112.1 654.3,108.8 663.6,105.6 672.9,102.3 682.4,99.0 691.9,95.8 701.5,92.5 711.1,89.3 720.8,86.0 730.6,82.8 740.4,79.5 750.3,76.2 760.2,73.0 770.1,69.7 780.1,66.5 790.1,63.2 800.2,60.0 810.3,56.7 820.4,53.4 830.6,50.2 840.7,46.9 850.9,43.7 861.1,40.4 871.3,37.2 881.5,33.9 891.8,30.6 902.0,27.4"/><path d="M750.3,564.8 1053.7,564.8"/><path d="M608.9,515.9 1195.1,515.9"/><path d="M487.5,467.1 1316.5,467.1"/><path d="M394.3,418.2 1409.7,418.2"/><path d="M335.8,369.4 1468.2,369.4"/><path d="M315.8,320.5 1488.2,320.5"/><path d="M335.8,271.6 1468.2,271.6"/><path d="M394.3,222.8 1409.7,222.8"/><path d="M487.5,173.9 1316.5,173.9"/><path d="M608.9,125.1 1195.1,125.1"/><path d="M750.3,76.2 1053.7,76.2"/></g><g fill="none" stroke="#7a7a7a" stroke-width="1.0" stroke-dasharray="1.39 2.29"><path d="M836.8,113.1 835.5,112.7 834.2,112.3 832.9,112.0 831.5,111.7 830.1,111.4 828.7,111.1 827.3,110.9 825.8,110.7 824.4,110.6 822.9,110.4 821.3,110.3 819.8,110.2 818.2,110.2 816.6,110.2 814.9,110.2 813.2,110.2 811.5,110.3 809.8,110.4 808.0,110.5 806.2,110.7 804.4,110.9 802.5,111.1 800.6,111.3 798.7,111.6 796.8,111.9 794.8,112.3 792.7,112.6 790.7,113.0 788.6,113.4 786.5,113.9 784.3,114.4 782.1,114.9 779.9,115.4 777.7,115.9 775.4,116.5 773.1,117.1 770.8,117.7 768.4,118.4 766.0,119.0 763.6,119.7 761.1,120.4 758.6,121.2 756.1,121.9 753.6,122.7 751.1,123.5 748.5,124.3 745.9,125.1 743.2,126.0 740.6,126.8 737.9,127.7 735.2,128.6 732.5,129.5 729.8,130.5 727.0,131.4 724.2,132.4 721.5,133.3 718.7,134.3 715.8,135.3 713.0,136.4 710.1,137.4 707.3,138.4 704.4,139.5 701.5,140.6 698.6,141.6 695.7,142.7 692.8,143.8 689.8,144.9 686.9,146.1 684.0,147.2 681.0,148.4 678.0,149.5 675.1,150.7 672.1,151.8 669.1,153.0 666.1,154.2 663.2,155.4 660.2,156.6 657.2,157.8 654.2,159.0 651.2,160.3 648.2,161.5 645.2,162.8 642.2,164.0 639.2,165.3 636.3,166.5 633.3,167.8 630.3,169.1 627.3,170.3 624.3,171.6 621.4,172.9 618.4,174.2 615.5,175.5 612.5,176.8 609.6,178.1 606.6,179.5 603.7,180.8 600.8,182.1 597.9,183.4 595.0,184.8 592.1,186.1 589.2,187.5 586.3,188.8 583.5,190.2 580.6,191.5 577.8,192.9 574.9,194.2 572.1,195.6 569.3,197.0 566.5,198.3 563.8,199.7 561.0,201.1 558.3,202.5 555.5,203.9 552.8,205.2 550.1,206.6 547.4,208.0 544.8,209.4 542.1,210.8 539.5,212.2 536.9,213.6 534.3,215.0 531.7,216.4 529.1,217.9 526.6,219.3 524.1,220.7 521.6,222.1 519.1,223.5 516.6,224.9 514.2,226.4 511.7,227.8 509.3,229.2 506.9,230.6 504.6,232.1 502.2,233.5 499.9,234.9 497.6,236.4 495.4,237.8 493.1,239.3 490.9,240.7 488.7,242.1 486.5,243.6 484.3,245.0 482.2,246.5 480.1,247.9 478.0,249.4 475.9,250.8 473.9,252.3 471.9,253.7 469.9,255.2 467.9,256.6 466.0,258.1 464.1,259.5 462.2,261.0 460.3,262.4 458.5,263.9 456.7,265.4 454.9,266.8 453.2,268.3 451.4,269.7 449.7,271.2 448.1,272.7 446.4,274.1 444.8,275.6 443.2,277.1 441.6,278.5 440.1,280.0 438.6,281.5 437.1,282.9 435.7,284.4 434.3,285.9 432.9,287.4 431.5,288.8 430.2,290.3 428.9,291.8 427.6,293.2 426.4,294.7 425.1,296.2 424.0,297.7 422.8,299.1 421.7,300.6 420.6,302.1 419.5,303.6 418.5,305.0 417.5,306.5 416.5,308.0 415.5,309.4 414.6,310.9 413.7,312.4 412.9,313.9 412.1,315.4 411.3,316.8 410.5,318.3 409.8,319.8 409.1,321.3 408.4,322.7 407.8,324.2 407.2,325.7 406.6,327.2 406.0,328.6 405.5,330.1 405.0,331.6 404.6,333.1 404.2,334.5 403.8,336.0 403.4,337.5 403.1,339.0 402.8,340.4 402.5,341.9 402.3,343.4 402.1,344.9 401.9,346.3 401.8,347.8 401.6,349.3 401.6,350.7 401.5,352.2 401.5,353.7 401.5,355.2 401.6,356.6 401.6,358.1 401.7,359.6 401.9,361.0 402.0,362.5 402.2,364.0 402.5,365.4 402.7,366.9"/><path d="M1120.2,208.5 1118.3,207.0 1116.4,205.5 1114.4,204.1 1112.5,202.6 1110.6,201.2 1108.6,199.7 1106.6,198.2 1104.6,196.8 1102.6,195.3 1100.6,193.9 1098.6,192.4 1096.6,191.0 1094.6,189.6 1092.5,188.1 1090.5,186.7 1088.4,185.2 1086.4,183.8 1084.3,182.4 1082.2,181.0 1080.1,179.5 1078.0,178.1 1075.9,176.7 1073.8,175.3 1071.7,173.9 1069.6,172.5 1067.4,171.1 1065.3,169.7 1063.2,168.3 1061.0,166.9 1058.9,165.5 1056.7,164.2 1054.5,162.8 1052.4,161.4 1050.2,160.1 1048.0,158.7 1045.9,157.3 1043.7,156.0 1041.5,154.7 1039.3,153.3 1037.2,152.0 1035.0,150.7 1032.8,149.4 1030.6,148.0 1028.4,146.7 1026.3,145.4 1024.1,144.2 1021.9,142.9 1019.7,141.6 1017.5,140.3 1015.4,139.1 1013.2,137.8 1011.0,136.6 1008.9,135.4 1006.7,134.2 1004.6,132.9 1002.4,131.8 1000.3,130.6 998.1,129.4 996.0,128.2 993.9,127.1 991.7,125.9 989.6,124.8 987.5,123.7 985.4,122.6 983.3,121.5 981.3,120.4 979.2,119.4 977.1,118.3 975.1,117.3 973.0,116.3 971.0,115.3 969.0,114.3 967.0,113.4 965.0,112.5 963.0,111.5 961.0,110.7 959.1,109.8 957.1,108.9 955.2,108.1 953.3,107.3 951.4,106.5 949.5,105.8 947.6,105.0 945.7,104.3 943.9,103.7 942.1,103.0 940.2,102.4 938.4,101.8 936.6,101.3 934.9,100.7 933.1,100.2 931.3,99.8 929.6,99.3 927.9,98.9 926.2,98.6 924.4,98.2 922.7,97.9 921.1,97.7 919.4,97.4 917.7,97.3 916.0,97.1 914.4,97.0 912.7,96.9 911.1,96.9 909.5,96.8 907.8,96.9 906.2,96.9 904.6,97.0 902.9,97.2 901.3,97.4 899.7,97.6 898.0,97.8 896.4,98.1 894.8,98.4 893.1,98.8 891.5,99.2 889.9,99.6 888.2,100.0 886.5,100.5 884.9,101.0 883.2,101.6 881.5,102.1 879.9,102.8 878.2,103.4 876.5,104.1 874.8,104.7 873.0,105.5 871.3,106.2 869.6,107.0 867.8,107.8 866.1,108.6 864.3,109.4 862.5,110.3 860.8,111.2 859.0,112.1 857.2,113.0 855.4,113.9 853.6,114.9 851.8,115.9 849.9,116.9 848.1,117.9 846.2,118.9 844.4,120.0"/><path d="M606.0,127.0 610.3,125.8 614.6,124.7 618.8,123.5 623.0,122.4 627.1,121.3 631.3,120.2 635.4,119.1 639.5,118.0 643.5,117.0 647.5,115.9 651.5,114.9 655.4,113.9 659.3,112.9 663.2,112.0 667.0,111.0 670.8,110.1 674.5,109.2 678.2,108.3 681.8,107.4 685.3,106.6 688.9,105.8 692.3,105.0 695.7,104.2 699.0,103.5 702.3,102.7 705.5,102.0 708.6,101.4 711.7,100.7 714.7,100.1 717.6,99.6 720.5,99.0 723.3,98.5 726.0,98.0 728.6,97.6 731.1,97.2 733.6,96.8 736.0,96.4 738.3,96.1 740.5,95.8 742.7,95.6 744.7,95.4 746.7,95.2 748.6,95.1 750.5,95.0 752.2,95.0 753.9,94.9 755.5,95.0 757.0,95.0 758.4,95.1 759.8,95.2 761.0,95.4 762.2,95.6 763.4,95.9 764.4,96.1 765.5,96.5 766.4,96.8 767.3,97.2 768.1,97.6 768.8,98.1 769.5,98.6 770.1,99.1 770.7,99.6 771.3,100.2 771.7,100.8 772.2,101.4 772.6,102.1 772.9,102.8 773.2,103.5 773.5,104.3 773.7,105.0 773.9,105.8 774.0,106.7 774.1,107.5 774.2,108.4 774.3,109.3 774.3,110.2 774.3,111.1 774.3,112.1 774.3,113.0 774.2,114.0 774.1,115.0 774.0,116.0 773.9,117.1 773.8,118.1 773.6,119.2 773.4,120.3 773.2,121.4 773.0,122.5 772.8,123.6 772.6,124.8 772.4,125.9 772.2,127.1 771.9,128.3 771.6,129.5 771.4,130.7 771.1,131.9 770.8,133.1 770.6,134.3 770.3,135.6 770.0,136.8 769.7,138.1 769.4,139.3 769.1,140.6 768.8,141.9 768.5,143.2 768.2,144.5 767.9,145.8 767.6,147.1 767.3,148.4 767.0,149.7 766.7,151.0 766.4,152.4 766.1,153.7 765.8,155.1 765.5,156.4 765.2,157.8 764.9,159.1 764.6,160.5 764.4,161.9 764.1,163.2 763.8,164.6 763.5,166.0 763.3,167.4 763.0,168.8 762.8,170.2 762.5,171.6 762.3,173.0 762.0,174.4 761.8,175.8 761.5,177.2 761.3,178.7 761.1,180.1 760.9,181.5 760.7,182.9 760.5,184.4 760.3,185.8 760.1,187.2 759.9,188.7 759.7,190.1 759.6,191.6 759.4,193.0 759.3,194.5 759.1,195.9 759.0,197.4 758.8,198.8 758.7,200.3 758.6,201.8 758.5,203.2 758.4,204.7 758.3,206.2 758.2,207.6 758.1,209.1 758.1,210.6 758.0,212.0 757.9,213.5 757.9,215.0 757.9,216.5 757.8,218.0 757.8,219.4 757.8,220.9 757.8,222.4 757.8,223.9 757.8,225.4 757.8,226.9 757.9,228.4 757.9,229.9 757.9,231.4 758.0,232.8 758.1,234.3 758.1,235.8 758.2,237.3 758.3,238.8 758.4,240.3 758.5,241.8 758.7,243.3 758.8,244.8 758.9,246.3 759.1,247.9 759.2,249.4 759.4,250.9 759.6,252.4 759.7,253.9 759.9,255.4 760.1,256.9 760.3,258.4 760.6,259.9 760.8,261.4 761.0,262.9 761.3,264.5 761.5,266.0 761.8,267.5 762.1,269.0 762.3,270.5 762.6,272.0 762.9,273.5 763.2,275.1 763.6,276.6 763.9,278.1 764.2,279.6 764.6,281.1 764.9,282.6 765.3,284.2 765.7,285.7 766.1,287.2 766.4,288.7 766.8,290.2 767.3,291.8 767.7,293.3 768.1,294.8 768.5,296.3 769.0,297.9 769.4,299.4 769.9,300.9 770.4,302.4 770.8,303.9 771.3,305.5 771.8,307.0 772.3,308.5 772.8,310.0 773.4,311.6 773.9,313.1 774.4,314.6 775.0,316.1 775.5,317.6 776.1,319.2 776.7,320.7 777.3,322.2 777.9,323.7 778.5,325.3 779.1,326.8 779.7,328.3 780.3,329.8 780.9,331.4 781.6,332.9 782.2,334.4 782.9,335.9 783.5,337.5 784.2,339.0 784.9,340.5 785.6,342.0 786.3,343.5 787.0,345.1 787.7,346.6 788.4,348.1 789.1,349.6 789.9,351.1 790.6,352.7 791.3,354.2 792.1,355.7 792.9,357.2 793.6,358.7 794.4,360.3 795.2,361.8 796.0,363.3 796.8,364.8 797.6,366.3"/><path d="M791.9,125.9 791.4,127.2 790.9,128.6 790.4,130.0 789.9,131.4 789.4,132.8 788.9,134.2 788.4,135.6 787.9,137.0 787.4,138.4 786.9,139.9 786.4,141.3 786.0,142.7 785.5,144.2 785.0,145.6 784.5,147.1 784.0,148.5 783.6,150.0 783.1,151.5 782.6,152.9 782.2,154.4 781.7,155.9 781.3,157.3 780.9,158.8 780.4,160.3 780.0,161.8 779.6,163.3 779.1,164.8 778.7,166.3 778.3,167.8 777.9,169.3 777.5,170.8 777.1,172.3 776.8,173.8 776.4,175.3 776.0,176.8 775.7,178.3 775.3,179.8 775.0,181.3 774.6,182.8 774.3,184.4 774.0,185.9 773.6,187.4 773.3,188.9 773.0,190.5 772.7,192.0 772.5,193.5 772.2,195.0 771.9,196.6 771.6,198.1 771.4,199.6 771.1,201.2 770.9,202.7 770.7,204.3 770.5,205.8 770.2,207.3 770.0,208.9 769.8,210.4 769.7,212.0 769.5,213.5 769.3,215.1 769.2,216.6 769.0,218.1 768.9,219.7 768.7,221.2 768.6,222.8 768.5,224.3 768.4,225.9 768.3,227.4 768.2,229.0 768.1,230.6 768.0,232.1 768.0,233.7 767.9,235.2 767.9,236.8 767.8,238.3 767.8,239.9 767.8,241.5 767.8,243.0 767.8,244.6 767.8,246.1 767.8,247.7 767.8,249.3 767.9,250.8 767.9,252.4 768.0,253.9 768.0,255.5 768.1,257.1 768.2,258.6 768.3,260.2 768.4,261.8 768.5,263.3 768.6,264.9 768.8,266.5 768.9,268.0 769.0,269.6 769.2,271.2 769.4,272.7 769.5,274.3 769.7,275.9 769.9,277.4 770.1,279.0 770.3,280.6 770.6,282.1 770.8,283.7 771.0,285.3 771.3,286.9 771.6,288.4 771.8,290.0 772.1,291.6 772.4,293.1 772.7,294.7 773.0,296.3 773.3,297.8 773.6,299.4 774.0,301.0 774.3,302.6 774.7,304.1 775.0,305.7 775.4,307.3 775.8,308.8 776.2,310.4 776.6,312.0 777.0,313.6 777.4,315.1 777.8,316.7 778.2,318.3 778.7,319.9 779.1,321.4 779.6,323.0 780.0,324.6 780.5,326.1 781.0,327.7 781.5,329.3 782.0,330.9 782.5,332.4 783.0,334.0 783.6,335.6 784.1,337.1 784.6,338.7 785.2,340.3 785.7,341.9 786.3,343.4 786.9,345.0 787.5,346.6 788.1,348.1 788.7,349.7 789.3,351.3 789.9,352.9 790.5,354.4 791.2,356.0 791.8,357.6 792.4,359.1 793.1,360.7 793.8,362.3 794.4,363.8 795.1,365.4 795.8,367.0"/><path d="M806.0,122.0 805.4,123.4 804.7,124.9 804.1,126.4 803.5,127.9 802.8,129.4 802.2,130.9 801.6,132.3 800.9,133.8 800.3,135.3 799.7,136.9 799.1,138.4 798.5,139.9 797.9,141.4 797.3,142.9 796.7,144.4 796.1,146.0 795.5,147.5 794.9,149.0 794.4,150.5 793.8,152.1 793.2,153.6 792.7,155.1 792.1,156.7 791.6,158.2 791.0,159.8 790.5,161.3 790.0,162.9 789.5,164.4 789.0,166.0 788.5,167.5 788.0,169.1 787.5,170.6 787.0,172.2 786.5,173.7 786.0,175.3 785.6,176.8 785.1,178.4 784.7,180.0 784.2,181.5 783.8,183.1 783.4,184.7 783.0,186.2 782.5,187.8 782.1,189.4 781.7,190.9 781.4,192.5 781.0,194.1 780.6,195.6 780.3,197.2 779.9,198.8 779.6,200.4 779.2,201.9 778.9,203.5 778.6,205.1 778.3,206.7 778.0,208.2 777.7,209.8 777.4,211.4 777.1,213.0 776.8,214.6 776.6,216.1 776.3,217.7 776.1,219.3 775.9,220.9 775.6,222.5 775.4,224.0 775.2,225.6 775.0,227.2 774.8,228.8 774.7,230.4 774.5,232.0 774.3,233.6 774.2,235.1 774.0,236.7 773.9,238.3 773.8,239.9 773.7,241.5 773.5,243.1 773.5,244.7 773.4,246.3 773.3,247.9 773.2,249.4 773.2,251.0 773.1,252.6 773.1,254.2 773.0,255.8 773.0,257.4 773.0,259.0 773.0,260.6 773.0,262.2 773.0,263.8 773.0,265.4 773.1,266.9 773.1,268.5 773.2,270.1 773.2,271.7 773.3,273.3 773.4,274.9 773.5,276.5 773.6,278.1 773.7,279.7 773.8,281.3 773.9,282.9 774.1,284.5 774.2,286.1 774.4,287.7 774.5,289.3 774.7,290.9 774.9,292.5 775.1,294.0 775.3,295.6 775.5,297.2 775.7,298.8 775.9,300.4 776.2,302.0 776.4,303.6 776.7,305.2 776.9,306.8 777.2,308.4 777.5,310.0 777.8,311.6 778.1,313.2 778.4,314.8 778.7,316.4 779.1,318.0 779.4,319.6 779.7,321.2 780.1,322.8 780.5,324.4 780.8,326.0 781.2,327.6 781.6,329.2 782.0,330.7 782.4,332.3 782.8,333.9 783.3,335.5 783.7,337.1 784.2,338.7 784.6,340.3 785.1,341.9 785.5,343.5 786.0,345.1 786.5,346.7 787.0,348.3 787.5,349.9 788.0,351.5 788.5,353.1 789.1,354.7 789.6,356.3 790.1,357.9 790.7,359.5 791.3,361.1 791.8,362.7 792.4,364.2 793.0,365.8 793.6,367.4"/><path d="M765.8,220.5 765.7,222.0 765.7,223.6 765.6,225.1 765.6,226.6 765.5,228.2 765.5,229.7 765.5,231.2 765.5,232.8 765.5,234.3 765.5,235.8 765.5,237.4 765.5,238.9 765.6,240.4 765.6,242.0 765.7,243.5 765.7,245.1 765.8,246.6 765.9,248.2 766.0,249.7 766.1,251.2 766.2,252.8 766.3,254.3 766.4,255.9 766.6,257.4 766.7,259.0 766.9,260.5 767.0,262.1 767.2,263.6 767.4,265.2 767.6,266.7 767.8,268.3 768.0,269.8 768.2,271.4 768.4,272.9 768.7,274.5 768.9,276.0 769.2,277.6 769.4,279.1 769.7,280.7 770.0,282.2 770.3,283.8 770.6,285.3 770.9,286.9 771.2,288.4 771.5,290.0 771.9,291.5 772.2,293.1 772.6,294.7 772.9,296.2 773.3,297.8 773.7,299.3 774.1,300.9 774.5,302.4 774.9,304.0 775.3,305.5 775.7,307.1 776.2,308.7 776.6,310.2 777.1,311.8 777.5,313.3 778.0,314.9 778.5,316.4 779.0,318.0 779.5,319.6 780.0,321.1 780.5,322.7 781.0,324.2 781.5,325.8 782.1,327.3 782.6,328.9 783.2,330.5 783.7,332.0 784.3,333.6 784.9,335.1 785.5,336.7 786.1,338.2 786.7,339.8 787.3,341.3 787.9,342.9 788.5,344.5 789.2,346.0 789.8,347.6 790.4,349.1 791.1,350.7 791.8,352.2 792.4,353.8 793.1,355.3 793.8,356.9 794.5,358.4 795.2,360.0 795.9,361.6 796.6,363.1 797.4,364.7 798.1,366.2"/><path d="M1083.3,255.3 1081.7,255.3 1080.1,255.4 1078.4,255.4 1076.8,255.4 1075.2,255.5 1073.6,255.5 1072.0,255.6 1070.4,255.7 1068.8,255.7 1067.2,255.8 1065.5,255.9 1063.9,255.9 1062.3,256.0 1060.7,256.1 1059.1,256.2 1057.5,256.3 1055.9,256.4 1054.4,256.5 1052.8,256.7 1051.2,256.8 1049.6,256.9 1048.0,257.0 1046.4,257.2 1044.8,257.3 1043.2,257.5 1041.6,257.6 1040.1,257.8 1038.5,257.9 1036.9,258.1 1035.3,258.3 1033.7,258.5 1032.2,258.6 1030.6,258.8 1029.0,259.0 1027.4,259.2 1025.9,259.4 1024.3,259.6 1022.7,259.8 1021.1,260.0 1019.6,260.3 1018.0,260.5 1016.4,260.7 1014.9,260.9 1013.3,261.2 1011.7,261.4 1010.2,261.7 1008.6,261.9 1007.0,262.2 1005.5,262.4 1003.9,262.7 1002.3,263.0 1000.8,263.3 999.2,263.5 997.7,263.8 996.1,264.1 994.5,264.4 993.0,264.7 991.4,265.0 989.9,265.3 988.3,265.6 986.7,265.9 985.2,266.2 983.6,266.6 982.1,266.9 980.5,267.2 979.0,267.5 977.4,267.9 975.8,268.2 974.3,268.6 972.7,268.9 971.2,269.3 969.6,269.6 968.1,270.0 966.5,270.4 965.0,270.7 963.4,271.1 961.8,271.5 960.3,271.8 958.7,272.2 957.2,272.6 955.6,273.0 954.1,273.4 952.5,273.8 951.0,274.2 949.4,274.6 947.9,275.0 946.3,275.4 944.7,275.8 943.2,276.2 941.6,276.7 940.1,277.1 938.5,277.5 937.0,277.9 935.4,278.4 933.9,278.8 932.3,279.3 930.7,279.7 929.2,280.1 927.6,280.6 926.1,281.0 924.5,281.5 923.0,281.9 921.4,282.4 919.9,282.9 918.3,283.3 916.7,283.8 915.2,284.3 913.6,284.7 912.1,285.2 910.5,285.7 909.0,286.2 907.4,286.6 905.9,287.1 904.3,287.6 902.7,288.1 901.2,288.6 899.6,289.1 898.1,289.6 896.5,290.1 895.0,290.6 893.4,291.1 891.8,291.6 890.3,292.1 888.7,292.6 887.2,293.1 885.6,293.6 884.1,294.1 882.5,294.7 881.0,295.2 879.4,295.7 877.8,296.2 876.3,296.7 874.7,297.3 873.2,297.8 871.6,298.3 870.1,298.8 868.5,299.4 867.0,299.9 865.4,300.4 863.9,301.0 862.3,301.5 860.8,302.0 859.2,302.6 857.7,303.1 856.1,303.7 854.5,304.2 853.0,304.7 851.4,305.3 849.9,305.8 848.3,306.4 846.8,306.9 845.2,307.5 843.7,308.0 842.2,308.6 840.6,309.1 839.1,309.7 837.5,310.2 836.0,310.8 834.4,311.3 832.9,311.9 831.3,312.4 829.8,313.0 828.2,313.6 826.7,314.1 825.2,314.7 823.6,315.2 822.1,315.8 820.5,316.3 819.0,316.9 817.5,317.5 815.9,318.0 814.4,318.6 812.9,319.1 811.3,319.7 809.8,320.3 808.3,320.8 806.7,321.4 805.2,321.9 803.7,322.5 802.1,323.0 800.6,323.6 799.1,324.2 797.5,324.7 796.0,325.3 794.5,325.8 793.0,326.4 791.5,327.0 789.9,327.5 788.4,328.1 786.9,328.6 785.4,329.2 783.9,329.7 782.3,330.3 780.8,330.8 779.3,331.4 777.8,331.9 776.3,332.5 774.8,333.0 773.3,333.6 771.7,334.1 770.2,334.7 768.7,335.2 767.2,335.8 765.7,336.3 764.2,336.9 762.7,337.4 761.2,337.9 759.7,338.5 758.2,339.0 756.7,339.6 755.2,340.1 753.7,340.6 752.2,341.2 750.7,341.7 749.2,342.2 747.7,342.7 746.2,343.3 744.8,343.8 743.3,344.3 741.8,344.8 740.3,345.4 738.8,345.9"/><path d="M1146.6,253.9 1144.9,253.9 1143.3,254.0 1141.7,254.0 1140.1,254.1 1138.5,254.1 1136.9,254.2 1135.3,254.2 1133.7,254.3 1132.1,254.3 1130.5,254.4 1128.9,254.5 1127.3,254.6 1125.7,254.7 1124.1,254.8 1122.5,254.9 1120.9,255.0 1119.3,255.1 1117.8,255.2 1116.2,255.3 1114.6,255.4 1113.0,255.6 1111.5,255.7 1109.9,255.9 1108.3,256.0 1106.8,256.2 1105.2,256.3 1103.6,256.5 1102.1,256.6 1100.5,256.8 1099.0,257.0 1097.4,257.2 1095.8,257.4 1094.3,257.6 1092.7,257.7 1091.2,257.9 1089.6,258.2 1088.1,258.4 1086.6,258.6 1085.0,258.8 1083.5,259.0 1081.9,259.3 1080.4,259.5 1078.8,259.7 1077.3,260.0 1075.8,260.2 1074.2,260.5 1072.7,260.7 1071.2,261.0 1069.6,261.3 1068.1,261.6 1066.6,261.8 1065.1,262.1 1063.5,262.4 1062.0,262.7 1060.5,263.0 1058.9,263.3 1057.4,263.6 1055.9,263.9 1054.4,264.2 1052.9,264.5 1051.3,264.9 1049.8,265.2 1048.3,265.5 1046.8,265.8 1045.2,266.2 1043.7,266.5 1042.2,266.9 1040.7,267.2 1039.2,267.6 1037.7,267.9 1036.1,268.3 1034.6,268.7 1033.1,269.0 1031.6,269.4 1030.1,269.8 1028.6,270.2 1027.0,270.5 1025.5,270.9 1024.0,271.3 1022.5,271.7 1021.0,272.1 1019.5,272.5 1017.9,272.9 1016.4,273.3 1014.9,273.8 1013.4,274.2 1011.9,274.6 1010.4,275.0 1008.9,275.4 1007.3,275.9 1005.8,276.3 1004.3,276.7 1002.8,277.2 1001.3,277.6 999.8,278.1 998.2,278.5 996.7,279.0 995.2,279.4 993.7,279.9 992.2,280.4 990.7,280.8 989.1,281.3 987.6,281.8 986.1,282.2 984.6,282.7 983.1,283.2 981.5,283.7 980.0,284.1 978.5,284.6 977.0,285.1 975.5,285.6 973.9,286.1 972.4,286.6 970.9,287.1 969.4,287.6 967.9,288.1 966.3,288.6 964.8,289.1 963.3,289.6 961.8,290.1 960.2,290.7 958.7,291.2 957.2,291.7 955.7,292.2 954.1,292.7 952.6,293.3 951.1,293.8 949.6,294.3 948.0,294.8 946.5,295.4 945.0,295.9 943.4,296.4 941.9,297.0 940.4,297.5 938.9,298.0 937.3,298.6 935.8,299.1 934.3,299.7 932.7,300.2 931.2,300.8 929.7,301.3 928.2,301.9 926.6,302.4 925.1,303.0 923.6,303.5 922.0,304.1 920.5,304.6 919.0,305.2 917.4,305.7 915.9,306.3 914.4,306.9 912.8,307.4 911.3,308.0 909.8,308.5 908.2,309.1 906.7,309.7 905.2,310.2 903.6,310.8 902.1,311.4 900.6,311.9 899.1,312.5 897.5,313.1 896.0,313.6 894.5,314.2 892.9,314.8 891.4,315.3 889.9,315.9 888.3,316.5 886.8,317.0 885.3,317.6 883.7,318.2 882.2,318.8 880.7,319.3 879.1,319.9 877.6,320.5 876.1,321.0 874.5,321.6 873.0,322.2 871.5,322.8 870.0,323.3 868.4,323.9 866.9,324.5 865.4,325.0 863.8,325.6 862.3,326.2 860.8,326.7 859.3,327.3 857.7,327.9 856.2,328.4 854.7,329.0 853.2,329.6 851.6,330.1 850.1,330.7 848.6,331.3 847.1,331.8 845.5,332.4 844.0,333.0 842.5,333.5 841.0,334.1 839.5,334.6 837.9,335.2 836.4,335.8 834.9,336.3 833.4,336.9 831.9,337.4 830.3,338.0 828.8,338.5 827.3,339.1 825.8,339.6 824.3,340.2 822.8,340.7 821.2,341.3 819.7,341.8 818.2,342.4 816.7,342.9 815.2,343.4 813.7,344.0 812.2,344.5 810.7,345.1 809.2,345.6 807.7,346.1 806.1,346.6 804.6,347.2 803.1,347.7 801.6,348.2 800.1,348.7 798.6,349.3 797.1,349.8 795.6,350.3 794.1,350.8 792.6,351.3 791.1,351.8 789.6,352.3 788.1,352.8 786.6,353.4 785.1,353.9 783.6,354.3 782.1,354.8 780.6,355.3 779.1,355.8 777.6,356.3 776.1,356.8 774.6,357.3 773.1,357.8 771.6,358.2 770.1,358.7 768.6,359.2 767.2,359.7 765.7,360.1 764.2,360.6"/><path d="M1146.3,254.8 1144.7,254.8 1143.1,254.9 1141.5,254.9 1139.9,255.0 1138.3,255.0 1136.7,255.1 1135.1,255.2 1133.5,255.2 1131.9,255.3 1130.3,255.4 1128.7,255.5 1127.1,255.6 1125.5,255.7 1123.9,255.8 1122.4,255.9 1120.8,256.0 1119.2,256.2 1117.6,256.3 1116.1,256.4 1114.5,256.6 1112.9,256.7 1111.4,256.9 1109.8,257.0 1108.3,257.2 1106.7,257.3 1105.1,257.5 1103.6,257.7 1102.0,257.9 1100.5,258.1 1098.9,258.2 1097.4,258.4 1095.8,258.6 1094.3,258.8 1092.7,259.0 1091.2,259.3 1089.7,259.5 1088.1,259.7 1086.6,259.9 1085.0,260.2 1083.5,260.4 1082.0,260.6 1080.4,260.9 1078.9,261.1 1077.4,261.4 1075.8,261.7 1074.3,261.9 1072.8,262.2 1071.3,262.5 1069.7,262.7 1068.2,263.0 1066.7,263.3 1065.2,263.6 1063.6,263.9 1062.1,264.2 1060.6,264.5 1059.1,264.8 1057.5,265.1 1056.0,265.4 1054.5,265.8 1053.0,266.1 1051.5,266.4 1049.9,266.7 1048.4,267.1 1046.9,267.4 1045.4,267.8 1043.9,268.1 1042.4,268.5 1040.9,268.8 1039.3,269.2 1037.8,269.6 1036.3,269.9 1034.8,270.3 1033.3,270.7 1031.8,271.0 1030.3,271.4 1028.7,271.8 1027.2,272.2 1025.7,272.6 1024.2,273.0 1022.7,273.4 1021.2,273.8 1019.7,274.2 1018.1,274.6 1016.6,275.0 1015.1,275.5 1013.6,275.9 1012.1,276.3 1010.6,276.7 1009.1,277.2 1007.5,277.6 1006.0,278.0 1004.5,278.5 1003.0,278.9 1001.5,279.4 1000.0,279.8 998.5,280.3 996.9,280.7 995.4,281.2 993.9,281.6 992.4,282.1 990.9,282.6 989.4,283.0 987.8,283.5 986.3,284.0 984.8,284.5 983.3,284.9 981.8,285.4 980.3,285.9 978.7,286.4 977.2,286.9 975.7,287.4 974.2,287.9 972.7,288.4 971.1,288.9 969.6,289.4 968.1,289.9 966.6,290.4 965.1,290.9 963.5,291.4 962.0,291.9 960.5,292.4 959.0,292.9 957.4,293.4 955.9,294.0 954.4,294.5 952.9,295.0 951.3,295.5 949.8,296.0 948.3,296.6 946.8,297.1 945.2,297.6 943.7,298.2 942.2,298.7 940.6,299.2 939.1,299.8 937.6,300.3 936.1,300.9 934.5,301.4 933.0,301.9 931.5,302.5 929.9,303.0 928.4,303.6 926.9,304.1 925.4,304.7 923.8,305.2 922.3,305.8 920.8,306.3 919.2,306.9 917.7,307.4 916.2,308.0 914.6,308.5 913.1,309.1 911.6,309.6 910.0,310.2 908.5,310.8 907.0,311.3 905.5,311.9 903.9,312.4 902.4,313.0 900.9,313.6 899.3,314.1 897.8,314.7 896.3,315.2 894.7,315.8 893.2,316.4 891.7,316.9 890.1,317.5 888.6,318.1 887.1,318.6 885.5,319.2 884.0,319.7 882.5,320.3 881.0,320.9 879.4,321.4 877.9,322.0 876.4,322.6 874.8,323.1 873.3,323.7 871.8,324.3 870.2,324.8 868.7,325.4 867.2,325.9 865.7,326.5 864.1,327.1 862.6,327.6 861.1,328.2 859.6,328.7 858.0,329.3 856.5,329.9 855.0,330.4 853.5,331.0 851.9,331.5 850.4,332.1 848.9,332.7 847.4,333.2 845.8,333.8 844.3,334.3 842.8,334.9 841.3,335.4 839.8,336.0 838.2,336.5 836.7,337.1 835.2,337.6 833.7,338.2 832.2,338.7 830.6,339.2 829.1,339.8 827.6,340.3 826.1,340.9 824.6,341.4 823.1,341.9 821.5,342.5 820.0,343.0 818.5,343.5 817.0,344.1 815.5,344.6 814.0,345.1 812.5,345.6 811.0,346.2 809.5,346.7 807.9,347.2 806.4,347.7 804.9,348.2 803.4,348.8 801.9,349.3 800.4,349.8 798.9,350.3 797.4,350.8 795.9,351.3 794.4,351.8 792.9,352.3 791.4,352.8 789.9,353.3 788.4,353.8 786.9,354.3 785.4,354.8 783.9,355.3 782.4,355.7 780.9,356.2 779.4,356.7 777.9,357.2 776.4,357.6 774.9,358.1 773.4,358.6 771.9,359.1 770.4,359.5 768.9,360.0 767.4,360.4 765.9,360.9 764.4,361.3"/><path d="M1156.8,256.9 1155.6,257.5 1154.4,258.1 1153.1,258.7 1151.9,259.3 1150.6,259.9 1149.4,260.5 1148.1,261.1 1146.9,261.7 1145.7,262.4 1144.4,263.0 1143.2,263.6 1141.9,264.2 1140.7,264.9 1139.4,265.5 1138.2,266.2 1136.9,266.8 1135.6,267.4 1134.4,268.1 1133.1,268.8 1131.9,269.4 1130.6,270.1 1129.3,270.7 1128.1,271.4 1126.8,272.1 1125.5,272.8 1124.3,273.4 1123.0,274.1 1121.7,274.8 1120.4,275.5 1119.1,276.2 1117.9,276.9 1116.6,277.6 1115.3,278.3 1114.0,279.0 1112.7,279.7 1111.4,280.4 1110.1,281.1 1108.8,281.8 1107.5,282.5 1106.2,283.3 1104.9,284.0 1103.6,284.7 1102.3,285.4 1101.0,286.1 1099.6,286.9 1098.3,287.6 1097.0,288.3 1095.7,289.1 1094.3,289.8 1093.0,290.5 1091.7,291.3 1090.3,292.0 1089.0,292.8 1087.7,293.5 1086.3,294.3 1085.0,295.0 1083.6,295.8 1082.3,296.5 1080.9,297.3 1079.6,298.0 1078.2,298.8 1076.8,299.5 1075.5,300.3 1074.1,301.1 1072.7,301.8 1071.4,302.6 1070.0,303.3 1068.6,304.1 1067.2,304.9 1065.8,305.6 1064.4,306.4 1063.0,307.2 1061.7,307.9 1060.3,308.7 1058.9,309.5 1057.5,310.2 1056.1,311.0 1054.6,311.8 1053.2,312.6 1051.8,313.3 1050.4,314.1 1049.0,314.9 1047.6,315.7 1046.2,316.4 1044.7,317.2 1043.3,318.0 1041.9,318.8 1040.4,319.5 1039.0,320.3 1037.6,321.1 1036.1,321.9 1034.7,322.6 1033.2,323.4 1031.8,324.2 1030.4,325.0 1028.9,325.7 1027.5,326.5 1026.0,327.3 1024.5,328.0 1023.1,328.8 1021.6,329.6 1020.2,330.4 1018.7,331.1 1017.2,331.9 1015.8,332.7 1014.3,333.4 1012.8,334.2 1011.3,335.0 1009.9,335.7 1008.4,336.5 1006.9,337.3 1005.4,338.0 1003.9,338.8 1002.5,339.6 1001.0,340.3 999.5,341.1 998.0,341.8 996.5,342.6 995.0,343.4 993.5,344.1 992.0,344.9 990.5,345.6 989.0,346.4 987.5,347.1 986.0,347.9 984.5,348.6 983.0,349.3 981.5,350.1 980.0,350.8 978.5,351.6 977.0,352.3 975.5,353.0 974.0,353.8 972.5,354.5 971.0,355.2 969.5,355.9 967.9,356.7 966.4,357.4 964.9,358.1 963.4,358.8 961.9,359.5 960.4,360.2 958.8,361.0 957.3,361.7 955.8,362.4 954.3,363.1 952.8,363.8 951.2,364.5 949.7,365.2 948.2,365.8 946.7,366.5 945.2,367.2 943.6,367.9 942.1,368.6 940.6,369.2 939.1,369.9 937.5,370.6 936.0,371.2 934.5,371.9 933.0,372.6 931.4,373.2 929.9,373.9 928.4,374.5 926.9,375.2 925.3,375.8 923.8,376.4 922.3,377.1 920.8,377.7 919.2,378.3 917.7,379.0 916.2,379.6 914.7,380.2 913.1,380.8 911.6,381.4 910.1,382.0 908.6,382.6 907.0,383.2 905.5,383.8 904.0,384.4 902.4,384.9 900.9,385.5 899.4,386.1 897.9,386.7 896.3,387.2 894.8,387.8 893.3,388.3 891.8,388.9 890.2,389.4 888.7,390.0 887.2,390.5 885.7,391.0 884.1,391.5 882.6,392.1 881.1,392.6 879.5,393.1 878.0,393.6 876.5,394.1 875.0,394.6 873.4,395.1 871.9,395.5 870.4,396.0 868.9,396.5 867.3,396.9 865.8,397.4 864.3,397.8 862.7,398.3 861.2,398.7 859.7,399.2 858.2,399.6 856.6,400.0 855.1,400.4 853.6,400.8 852.0,401.2 850.5,401.6 849.0,402.0 847.4,402.4 845.9,402.8 844.4,403.2 842.8,403.5 841.3,403.9 839.8,404.3 838.2,404.6 836.7,404.9"/><path d="M644.1,228.5 642.0,229.7 640.0,230.8 638.0,231.9 636.1,233.1 634.1,234.2 632.1,235.4 630.1,236.5 628.2,237.7 626.2,238.8 624.3,240.0 622.3,241.1 620.4,242.3 618.5,243.5 616.6,244.6 614.7,245.8 612.8,247.0 610.9,248.2 609.1,249.3 607.2,250.5 605.3,251.7 603.5,252.9 601.7,254.1 599.9,255.3 598.1,256.5 596.3,257.7 594.5,258.9 592.7,260.1 590.9,261.3 589.2,262.5 587.5,263.7 585.7,264.9 584.0,266.1 582.3,267.4 580.6,268.6 579.0,269.8 577.3,271.0 575.7,272.2 574.0,273.5 572.4,274.7 570.8,275.9 569.2,277.1 567.6,278.4 566.1,279.6 564.5,280.8 563.0,282.1 561.4,283.3 559.9,284.6 558.4,285.8 557.0,287.0 555.5,288.3 554.0,289.5 552.6,290.8 551.2,292.0 549.8,293.2 548.4,294.5 547.0,295.7 545.7,297.0 544.3,298.2 543.0,299.5 541.7,300.7 540.4,302.0 539.1,303.2 537.9,304.5 536.6,305.7 535.4,307.0 534.2,308.2 533.0,309.5 531.8,310.7 530.6,312.0 529.5,313.2 528.4,314.5 527.3,315.8 526.2,317.0 525.1,318.3 524.0,319.5 523.0,320.8 521.9,322.0 520.9,323.3 519.9,324.5 519.0,325.8 518.0,327.0 517.1,328.3 516.1,329.6 515.2,330.8 514.4,332.1 513.5,333.3 512.6,334.6 511.8,335.8 511.0,337.1 510.2,338.3 509.4,339.6 508.6,340.8 507.9,342.1 507.1,343.3 506.4,344.6 505.7,345.8 505.1,347.1 504.4,348.3 503.7,349.5 503.1,350.8 502.5,352.0 501.9,353.3 501.3,354.5 500.8,355.7 500.2,357.0 499.7,358.2 499.2,359.5 498.7,360.7 498.3,361.9 497.8,363.2 497.4,364.4 496.9,365.6 496.5,366.8 496.2,368.1 495.8,369.3 495.4,370.5 495.1,371.7 494.8,373.0 494.5,374.2 494.2,375.4 493.9,376.6 493.6,377.8 493.4,379.0 493.2,380.2 493.0,381.4 492.8,382.6 492.6,383.8 492.4,385.0 492.3,386.2 492.1,387.4 492.0,388.6 491.9,389.8 491.8,391.0 491.7,392.2 491.7,393.4 491.6,394.5 491.6,395.7 491.6,396.9 491.6,398.0 491.6,399.2 491.6,400.4 491.6,401.5 491.6,402.7 491.7,403.8 491.8,405.0 491.8,406.1 491.9,407.3 492.0,408.4 492.1,409.6 492.3,410.7 492.4,411.8 492.5,412.9 492.7,414.1 492.9,415.2 493.0,416.3 493.2,417.4 493.4,418.5 493.6,419.6 493.8,420.7 494.0,421.8 494.3,422.9 494.5,423.9 494.7,425.0 495.0,426.1 495.2,427.1 495.5,428.2"/><path d="M548.9,442.7 548.1,441.4 547.3,440.2 546.6,438.9 545.8,437.6 545.1,436.4 544.4,435.1 543.7,433.8 543.0,432.5 542.3,431.2 541.6,429.9 541.0,428.6 540.3,427.3 539.7,426.0 539.1,424.7 538.5,423.4 537.9,422.1 537.3,420.7 536.8,419.4 536.2,418.1 535.7,416.8 535.2,415.4 534.7,414.1 534.2,412.7 533.8,411.4 533.3,410.1 532.9,408.7 532.5,407.4 532.1,406.0 531.7,404.7 531.3,403.3 531.0,402.0 530.7,400.6 530.3,399.2 530.1,397.9 529.8,396.5 529.5,395.1 529.3,393.8 529.1,392.4 528.9,391.0 528.7,389.7 528.5,388.3 528.4,386.9 528.3,385.5 528.2,384.1 528.1,382.8 528.0,381.4 528.0,380.0 527.9,378.6 527.9,377.2 527.9,375.8 528.0,374.4 528.0,373.1 528.1,371.7 528.2,370.3 528.3,368.9 528.4,367.5 528.6,366.1 528.8,364.7 529.0,363.3 529.2,361.9 529.4,360.5 529.7,359.1 530.0,357.7 530.3,356.3 530.6,354.9 530.9,353.5 531.3,352.1 531.7,350.7 532.1,349.3 532.5,347.8 532.9,346.4 533.4,345.0 533.9,343.6 534.4,342.2 534.9,340.8 535.5,339.4 536.0,338.0 536.6,336.6 537.2,335.2 537.9,333.8 538.5,332.3 539.2,330.9 539.9,329.5 540.6,328.1 541.3,326.7 542.1,325.3 542.9,323.9 543.7,322.5 544.5,321.0 545.3,319.6 546.2,318.2 547.1,316.8 548.0,315.4 548.9,314.0 549.8,312.6 550.8,311.2 551.8,309.7 552.8,308.3 553.8,306.9 554.8,305.5 555.9,304.1 557.0,302.7 558.1,301.3 559.2,299.9 560.3,298.5 561.5,297.0 562.7,295.6 563.9,294.2 565.1,292.8 566.3,291.4 567.6,290.0 568.8,288.6 570.1,287.2 571.4,285.8 572.8,284.4 574.1,283.0 575.5,281.6 576.9,280.2 578.3,278.8 579.7,277.4"/></g><g fill="none" stroke="#2ab07f" stroke-width="2.0" stroke-dasharray="2.0 3.4"><path d="M593.1,260.7 594.9,259.7 596.8,258.7 598.7,257.7 600.5,256.7 602.4,255.7 604.3,254.7 606.2,253.7 608.1,252.7 610.0,251.8 611.9,250.8 613.8,249.8 615.7,248.8 617.6,247.9 619.5,246.9 621.5,246.0 623.4,245.0 625.3,244.0 627.3,243.1 629.2,242.2 631.2,241.2 633.1,240.3 635.1,239.4 637.1,238.4 639.0,237.5 641.0,236.6 643.0,235.7 645.0,234.8 646.9,233.9 648.9,233.0 650.9,232.1 652.9,231.2 654.9,230.3 656.9,229.5 658.9,228.6 660.9,227.7 662.8,226.9 664.8,226.0 666.8,225.2 668.8,224.3 670.8,223.5 672.8,222.7 674.8,221.8 676.8,221.0 678.8,220.2 680.8,219.4 682.8,218.6 684.8,217.8 686.8,217.1 688.8,216.3 690.8,215.5 692.8,214.7 694.8,214.0 696.8,213.2 698.7,212.5 700.7,211.8 702.7,211.0 704.7,210.3 706.7,209.6 708.6,208.9 710.6,208.2 712.6,207.5 714.5,206.9 716.5,206.2 718.5,205.5 720.4,204.9 722.4,204.2 724.3,203.6 726.2,203.0 728.2,202.3 730.1,201.7 732.0,201.1 734.0,200.6 735.9,200.0 737.8,199.4"/><path d="M600.9,261.9 602.7,260.9 604.5,259.9 606.4,258.9 608.2,257.9 610.0,256.9 611.9,255.9 613.8,254.9 615.6,253.9 617.5,253.0 619.4,252.0 621.2,251.0 623.1,250.1 625.0,249.1 626.9,248.1 628.8,247.2 630.7,246.2 632.6,245.3 634.5,244.3 636.5,243.4 638.4,242.4 640.3,241.5 642.2,240.6 644.2,239.7 646.1,238.7 648.0,237.8 650.0,236.9 651.9,236.0 653.9,235.1 655.8,234.2 657.8,233.3 659.7,232.4 661.7,231.6 663.7,230.7 665.6,229.8 667.6,228.9 669.6,228.1 671.5,227.2 673.5,226.4 675.5,225.5 677.4,224.7 679.4,223.9 681.4,223.0 683.3,222.2 685.3,221.4 687.3,220.6 689.2,219.8 691.2,219.0 693.2,218.2 695.1,217.5 697.1,216.7 699.1,215.9 701.0,215.2 703.0,214.4 705.0,213.7 706.9,212.9 708.9,212.2 710.8,211.5 712.8,210.8 714.7,210.0 716.7,209.3 718.6,208.7 720.5,208.0 722.5,207.3 724.4,206.6 726.3,206.0 728.3,205.3 730.2,204.7 732.1,204.0 734.0,203.4 735.9,202.8 737.9,202.2 739.8,201.6 741.7,201.0 743.6,200.4 745.4,199.9 747.3,199.3 749.2,198.8 751.1,198.2 753.0,197.7 754.8,197.2 756.7,196.7 758.5,196.2 760.4,195.7 762.2,195.2 764.1,194.7 765.9,194.3 767.8,193.8 769.6,193.4 771.4,192.9 773.2,192.5 775.0,192.1 776.8,191.7 778.6,191.3 780.4,191.0 782.2,190.6"/><path d="M600.9,261.9 602.7,260.9 604.6,259.9 606.4,258.9 608.3,257.9 610.1,256.9 612.0,255.9 613.9,254.9 615.7,253.9 617.6,253.0 619.5,252.0 621.4,251.0 623.3,250.1 625.2,249.1 627.1,248.1 629.0,247.2 631.0,246.2 632.9,245.3 634.8,244.3 636.8,243.4 638.7,242.4 640.6,241.5 642.6,240.6 644.5,239.7 646.5,238.7 648.4,237.8 650.4,236.9 652.4,236.0 654.3,235.1 656.3,234.2 658.3,233.3 660.2,232.5 662.2,231.6 664.2,230.7 666.1,229.8 668.1,229.0 670.1,228.1 672.1,227.3 674.1,226.4 676.0,225.6 678.0,224.8 680.0,223.9 682.0,223.1 684.0,222.3 685.9,221.5 687.9,220.7 689.9,219.9 691.9,219.1 693.9,218.3 695.8,217.5 697.8,216.8 699.8,216.0 701.8,215.3 703.7,214.5 705.7,213.8 707.7,213.0 709.6,212.3 711.6,211.6 713.6,210.9 715.5,210.2 717.5,209.5 719.4,208.8 721.4,208.1 723.3,207.5 725.3,206.8 727.2,206.2 729.2,205.5 731.1,204.9 733.0,204.3 734.9,203.6 736.9,203.0 738.8,202.4 740.7,201.9 742.6,201.3 744.5,200.7 746.4,200.1 748.3,199.6 750.2,199.1 752.1,198.5 754.0,198.0 755.8,197.5 757.7,197.0 759.6,196.5 761.4,196.0 763.3,195.5 765.1,195.1 767.0,194.6 768.8,194.2 770.6,193.8 772.5,193.4 774.3,193.0 776.1,192.6 777.9,192.2 779.7,191.8 781.5,191.4 783.3,191.1"/><path d="M593.1,260.7 594.9,259.7 596.8,258.7 598.7,257.7 600.5,256.7 602.4,255.7 604.3,254.7 606.2,253.7 608.0,252.7 609.9,251.7 611.8,250.7 613.8,249.7 615.7,248.8 617.6,247.8 619.5,246.8 621.4,245.8 623.4,244.9 625.3,243.9 627.3,243.0 629.2,242.0 631.2,241.1 633.1,240.1 635.1,239.2 637.1,238.3 639.0,237.3 641.0,236.4 643.0,235.5 645.0,234.6 646.9,233.7 648.9,232.8 650.9,231.9 652.9,231.0 654.9,230.1 656.9,229.2 658.9,228.3 660.9,227.5 662.9,226.6 664.9,225.7 666.9,224.9 668.9,224.0 670.9,223.2 672.9,222.4 674.9,221.5 676.9,220.7 678.9,219.9 680.9,219.1 682.9,218.3 684.9,217.5 686.9,216.7 688.9,215.9 690.9,215.1 692.8,214.4 694.8,213.6 696.8,212.8 698.8,212.1 700.8,211.4 702.8,210.6 704.8,209.9 706.8,209.2 708.7,208.5 710.7,207.8 712.7,207.1 714.6,206.4 716.6,205.7 718.6,205.0 720.5,204.4 722.5,203.7 724.4,203.1 726.4,202.4 728.3,201.8 730.3,201.2 732.2,200.6 734.1,200.0 736.0,199.4 738.0,198.8 739.9,198.3 741.8,197.7 743.7,197.2 745.6,196.6 747.5,196.1 749.4,195.6 751.2,195.1 753.1,194.6 755.0,194.1 756.9,193.6 758.7,193.1 760.6,192.7 762.4,192.2 764.3,191.8 766.1,191.4 767.9,190.9 769.8,190.5 771.6,190.1 773.4,189.8 775.2,189.4 777.0,189.0 778.8,188.7 780.6,188.4 782.4,188.0 784.1,187.7 785.9,187.4 787.7,187.1 789.4,186.9 791.2,186.6 792.9,186.4 794.7,186.1 796.4,185.9 798.1,185.7 799.8,185.5 801.5,185.3 803.3,185.1 805.0,185.0 806.7,184.8 808.3,184.7 810.0,184.6 811.7,184.4 813.4,184.3 815.1,184.3 816.7,184.2 818.4,184.1 820.0,184.1 821.7,184.0 823.3,184.0 825.0,184.0 826.6,184.0 828.2,184.0 829.8,184.1 831.5,184.1 833.1,184.2 834.7,184.2 836.3,184.3 837.9,184.4 839.5,184.5 841.1,184.6 842.7,184.8 844.3,184.9 845.9,185.1 847.4,185.2 849.0,185.4 850.6,185.6"/></g><g stroke="#a0a0a0" stroke-width="1.5" stroke-linecap="round"><line x1="643.9" y1="227.8" x2="695.2" y2="199.6"/><line x1="794.4" y1="124.4" x2="806.1" y2="90.6"/><line x1="806.7" y1="121.7" x2="825.0" y2="82.2"/><line x1="835.6" y1="114.4" x2="844.4" y2="118.3"/><line x1="759.4" y1="204.6" x2="759.6" y2="212.3"/><line x1="762.2" y1="210.8" x2="762.4" y2="221.7"/><line x1="825.6" y1="198.3" x2="827.1" y2="191.7"/><line x1="1083.3" y1="255.3" x2="1102.5" y2="255.3"/><line x1="1146.7" y1="254.2" x2="1163.3" y2="254.2"/><line x1="1160.5" y1="255.2" x2="1163.5" y2="253.4"/><line x1="1120.8" y1="208.0" x2="1130.0" y2="215.8"/></g><g stroke="#2ab07f" stroke-width="2.0"><line x1="737.8" y1="199.4" x2="748.3" y2="196.1"/><line x1="782.2" y1="190.6" x2="792.0" y2="188.9"/><line x1="783.3" y1="191.1" x2="803.1" y2="188.9"/><line x1="850.6" y1="185.6" x2="863.3" y2="188.0"/></g><rect x="747.0" y="194.8" width="2.6" height="2.6" fill="#f0603a"/><rect x="790.7" y="187.6" width="2.6" height="2.6" fill="#f0603a"/><rect x="801.8" y="187.6" width="2.6" height="2.6" fill="#f0603a"/><rect x="862.0" y="186.7" width="2.6" height="2.6" fill="#f0603a"/><path d="M614.9,268.9 614.5,269.8 614.0,270.6 613.6,271.5 613.1,272.3 612.6,273.2 612.1,274.0 611.5,274.9 610.9,275.7 610.4,276.5 609.8,277.3 609.1,278.1 608.5,278.9 607.8,279.7 607.1,280.4 606.5,281.2 605.7,281.9 605.0,282.6 604.3,283.3 603.5,284.0 602.8,284.6 602.0,285.2 601.2,285.9 600.4,286.5 599.6,287.0 598.8,287.6 597.9,288.1 597.1,288.6 596.2,289.1 595.4,289.6 594.5,290.0 593.7,290.4 592.8,290.8 591.9,291.1 591.0,291.5 590.1,291.8 589.2,292.0 588.4,292.3 587.5,292.5 586.6,292.7 585.7,292.8 584.8,293.0 583.9,293.1 583.0,293.1 582.2,293.2 581.3,293.2 580.5,293.2 579.6,293.1 578.8,293.1 577.9,293.0 577.1,292.8 576.3,292.7 575.5,292.5 574.7,292.3 574.0,292.0 573.2,291.8 572.5,291.5 571.8,291.1 571.1,290.8 570.5,290.4 569.8,290.0 569.2,289.6 568.6,289.1 568.1,288.6 567.5,288.1 567.0,287.6 566.5,287.0 566.1,286.5 565.6,285.9 565.2,285.2 564.9,284.6 564.6,284.0 564.3,283.3 564.0,282.6 563.8,281.9 563.6,281.2 563.5,280.4 563.4,279.7 563.3,278.9 563.2,278.1 563.2,277.3 563.3,276.5 563.4,275.7 563.5,274.9 563.6,274.0 563.8,273.2 564.1,272.3 564.3,271.5 564.7,270.6 565.0,269.8 565.4,268.9 565.8,268.1 566.3,267.2 566.8,266.3 567.3,265.5 567.9,264.6 568.5,263.8 569.1,262.9 569.8,262.1 570.5,261.3 571.2,260.4 572.0,259.6 572.8,258.8 573.6,258.0 574.5,257.2 575.3,256.5 576.2,255.7 577.1,255.0 578.1,254.3 579.0,253.5 580.0,252.9 581.0,252.2 582.0,251.5 583.0,250.9 584.0,250.3 585.0,249.7 586.0,249.2 587.1,248.6 588.1,248.1 589.2,247.6 590.2,247.2 591.3,246.7 592.3,246.3 593.3,245.9 594.4,245.6 595.4,245.3 596.4,245.0 597.4,244.7 598.4,244.5 599.4,244.3 600.4,244.1 601.3,244.0 602.2,243.8 603.2,243.8 604.0,243.7 604.9,243.7 605.8,243.7 606.6,243.8 607.4,243.8 608.2,244.0 608.9,244.1 609.7,244.3 610.4,244.5 611.0,244.7 611.7,245.0 612.3,245.3 612.9,245.6 613.4,245.9 614.0,246.3 614.5,246.7 614.9,247.2 615.4,247.6 615.8,248.1 616.1,248.6 616.5,249.2 616.8,249.7 617.1,250.3 617.3,250.9 617.5,251.5 617.7,252.2 617.9,252.9 618.0,253.5 618.1,254.3 618.1,255.0 618.2,255.7 618.2,256.5 618.2,257.2 618.1,258.0 618.0,258.8 617.9,259.6 617.8,260.4 617.6,261.3 617.4,262.1 617.2,262.9 616.9,263.8 616.7,264.6 616.4,265.5 616.0,266.3 615.7,267.2 615.3,268.1 614.9,268.9 Z" fill="none" stroke="#2ab07f" stroke-width="2.5"/><path d="M590.3,260.0 L592.3,264.2 L595.0,266.8 L592.6,268.6 L591.8,273.2 L589.6,268.9 L587.0,266.3 L589.4,264.0 Z" fill="#ff0000"/><text x="590.6" y="271.1" text-anchor="middle" fill="#ffffff" font-family="Liberation Sans" font-size="10.9">ORI</text><g fill="#8c8c8c" font-family="Liberation Sans" font-size="11.5"><text x="1488.2" y="330.1" text-anchor="middle">+180<tspan dx="2.6" dy="-3.4" font-size="7">°</tspan></text><text x="1390.5" y="330.1" text-anchor="middle">+210<tspan dx="2.6" dy="-3.4" font-size="7">°</tspan></text><text x="1292.8" y="330.1" text-anchor="middle">+240<tspan dx="2.6" dy="-3.4" font-size="7">°</tspan></text><text x="1195.1" y="330.1" text-anchor="middle">+270<tspan dx="2.6" dy="-3.4" font-size="7">°</tspan></text><text x="1097.4" y="330.1" text-anchor="middle">+300<tspan dx="2.6" dy="-3.4" font-size="7">°</tspan></text><text x="999.7" y="330.1" text-anchor="middle">+330<tspan dx="2.6" dy="-3.4" font-size="7">°</tspan></text><text x="902.0" y="330.1" text-anchor="middle">+0<tspan dx="2.6" dy="-3.4" font-size="7">°</tspan></text><text x="804.3" y="330.1" text-anchor="middle">+30<tspan dx="2.6" dy="-3.4" font-size="7">°</tspan></text><text x="706.6" y="330.1" text-anchor="middle">+60<tspan dx="2.6" dy="-3.4" font-size="7">°</tspan></text><text x="608.9" y="330.1" text-anchor="middle">+90<tspan dx="2.6" dy="-3.4" font-size="7">°</tspan></text><text x="511.2" y="330.1" text-anchor="middle">+120<tspan dx="2.6" dy="-3.4" font-size="7">°</tspan></text><text x="413.5" y="330.1" text-anchor="middle">+150<tspan dx="2.6" dy="-3.4" font-size="7">°</tspan></text><text x="315.8" y="330.1" text-anchor="middle">+180<tspan dx="2.6" dy="-3.4" font-size="7">°</tspan></text><text x="902.0" y="25.0" text-anchor="middle">+90<tspan dx="2.6" dy="-3.4" font-size="7">°</tspan></text><text x="902.0" y="123.3" text-anchor="middle">+60<tspan dx="2.6" dy="-3.4" font-size="7">°</tspan></text><text x="902.0" y="221.0" text-anchor="middle">+30<tspan dx="2.6" dy="-3.4" font-size="7">°</tspan></text><text x="902.0" y="428.5" text-anchor="middle">−30<tspan dx="2.6" dy="-3.4" font-size="7">°</tspan></text><text x="902.0" y="526.2" text-anchor="middle">−60<tspan dx="2.6" dy="-3.4" font-size="7">°</tspan></text><text x="902.0" y="624.0" text-anchor="middle">−90<tspan dx="2.6" dy="-3.4" font-size="7">°</tspan></text></g><g fill="#ffffff" font-family="Liberation Mono" font-size="13.9" xml:space="preserve"><text x="316" y="30.0">CA001J</text><text x="316" y="43.1">Beg: 20251026 03:19:28 (sol = 212.61°)</text><text x="316" y="56.4">End: 20251026 13:22:14 (sol = 213.03°)</text><text x="316" y="69.5">--------------------------------------</text><text x="316" y="82.0">...: 15</text><text x="316" y="95.2">ORI: 4</text></g><g font-family="Liberation Sans"><line x1="75.0" y1="842.3" x2="75.0" y2="641.6" stroke="#646464" stroke-width="2.0" stroke-dasharray="2.08 3.44" stroke-dashoffset="-0.6"/><line x1="218.9" y1="842.3" x2="218.9" y2="641.6" stroke="#646464" stroke-width="2.0" stroke-dasharray="2.08 3.44" stroke-dashoffset="-0.6"/><line x1="364.9" y1="842.3" x2="364.9" y2="641.6" stroke="#646464" stroke-width="2.0" stroke-dasharray="2.08 3.44" stroke-dashoffset="-0.6"/><line x1="505.9" y1="842.3" x2="505.9" y2="641.6" stroke="#646464" stroke-width="2.0" stroke-dasharray="2.08 3.44" stroke-dashoffset="-0.6"/><line x1="651.0" y1="842.3" x2="651.0" y2="641.6" stroke="#646464" stroke-width="2.0" stroke-dasharray="2.08 3.44" stroke-dashoffset="-0.6"/><line x1="796.8" y1="842.3" x2="796.8" y2="641.6" stroke="#646464" stroke-width="2.0" stroke-dasharray="2.08 3.44" stroke-dashoffset="-0.6"/><line x1="939.9" y1="842.3" x2="939.9" y2="641.6" stroke="#646464" stroke-width="2.0" stroke-dasharray="2.08 3.44" stroke-dashoffset="-0.6"/><line x1="1090.9" y1="842.3" x2="1090.9" y2="641.6" stroke="#646464" stroke-width="2.0" stroke-dasharray="2.08 3.44" stroke-dashoffset="-0.6"/><line x1="1238.9" y1="842.3" x2="1238.9" y2="641.6" stroke="#646464" stroke-width="2.0" stroke-dasharray="2.08 3.44" stroke-dashoffset="-0.6"/><line x1="1393.9" y1="842.3" x2="1393.9" y2="641.6" stroke="#646464" stroke-width="2.0" stroke-dasharray="2.08 3.44" stroke-dashoffset="-0.6"/><line x1="1548.0" y1="842.3" x2="1548.0" y2="641.6" stroke="#646464" stroke-width="2.0" stroke-dasharray="2.08 3.44" stroke-dashoffset="-0.6"/><line x1="1687.2" y1="842.3" x2="1687.2" y2="641.6" stroke="#646464" stroke-width="2.0" stroke-dasharray="2.08 3.44" stroke-dashoffset="-0.6"/><text transform="translate(139.60,642.61) rotate(-90) scale(0.8452,1)" x="0" y="0" text-anchor="end" dominant-baseline="central" fill="#505050" font-size="31">APR</text><text transform="translate(285.35,644.43) rotate(-90) scale(0.8710,1)" x="0" y="0" text-anchor="end" dominant-baseline="central" fill="#505050" font-size="31">MAY</text><text transform="translate(429.40,641.07) rotate(-90) scale(0.8155,1)" x="0" y="0" text-anchor="end" dominant-baseline="central" fill="#505050" font-size="31">JUN</text><text transform="translate(567.35,641.19) rotate(-90) scale(0.8148,1)" x="0" y="0" text-anchor="end" dominant-baseline="central" fill="#505050" font-size="31">JUL</text><text transform="translate(714.65,641.56) rotate(-90) scale(0.8723,1)" x="0" y="0" text-anchor="end" dominant-baseline="central" fill="#505050" font-size="31">AUG</text><text transform="translate(861.70,642.63) rotate(-90) scale(0.8345,1)" x="0" y="0" text-anchor="end" dominant-baseline="central" fill="#505050" font-size="31">SEP</text><text transform="translate(1007.00,643.30) rotate(-90) scale(0.8656,1)" x="0" y="0" text-anchor="end" dominant-baseline="central" fill="#505050" font-size="31">OCT</text><text transform="translate(1159.50,645.30) rotate(-90) scale(0.8723,1)" x="0" y="0" text-anchor="end" dominant-baseline="central" fill="#505050" font-size="31">NOV</text><text transform="translate(1309.50,643.41) rotate(-90) scale(0.8871,1)" x="0" y="0" text-anchor="end" dominant-baseline="central" fill="#505050" font-size="31">DEC</text><text transform="translate(1461.65,640.33) rotate(-90) scale(0.8339,1)" x="0" y="0" text-anchor="end" dominant-baseline="central" fill="#505050" font-size="31">JAN</text><text transform="translate(1617.85,644.27) rotate(-90) scale(0.8625,1)" x="0" y="0" text-anchor="end" dominant-baseline="central" fill="#505050" font-size="31">FEB</text><text transform="translate(1755.95,644.21) rotate(-90) scale(0.8969,1)" x="0" y="0" text-anchor="end" dominant-baseline="central" fill="#505050" font-size="31">MAR</text><line x1="1062.80" y1="842.3" x2="1062.80" y2="641.6" stroke="#ff0000" stroke-width="1.39" stroke-dasharray="5.14 2.22"/><line x1="1064.86" y1="842.3" x2="1064.86" y2="641.6" stroke="#ff0000" stroke-width="1.39" stroke-dasharray="5.14 2.22"/><line x1="105.9" y1="834.00" x2="130.0" y2="834.00" stroke="#c2df23" stroke-width="4.17"/><line x1="165.0" y1="834.00" x2="345.1" y2="834.00" stroke="#c2df23" stroke-width="4.17"/><line x1="365.9" y1="834.00" x2="625.1" y2="834.00" stroke="#c2df23" stroke-width="4.17"/><line x1="636.1" y1="834.00" x2="786.8" y2="834.00" stroke="#c2df23" stroke-width="4.17"/><line x1="807.0" y1="834.00" x2="899.8" y2="834.00" stroke="#c2df23" stroke-width="4.17"/><line x1="920.0" y1="834.00" x2="972.9" y2="834.00" stroke="#c2df23" stroke-width="4.17"/><line x1="984.1" y1="834.00" x2="1065.9" y2="834.00" stroke="#c2df23" stroke-width="4.17"/><line x1="1082.0" y1="834.00" x2="1203.9" y2="834.00" stroke="#c2df23" stroke-width="4.17"/><line x1="1244.0" y1="834.00" x2="1325.8" y2="834.00" stroke="#c2df23" stroke-width="4.17"/><line x1="1337.1" y1="834.00" x2="1356.0" y2="834.00" stroke="#c2df23" stroke-width="4.17"/><line x1="1381.1" y1="834.00" x2="1443.9" y2="834.00" stroke="#c2df23" stroke-width="4.17"/><line x1="1459.0" y1="834.00" x2="1512.1" y2="834.00" stroke="#c2df23" stroke-width="4.17"/><line x1="1523.0" y1="834.00" x2="1546.9" y2="834.00" stroke="#c2df23" stroke-width="4.17"/><line x1="1723.9" y1="834.00" x2="1748.1" y2="834.00" stroke="#c2df23" stroke-width="4.17"/><line x1="1758.0" y1="834.00" x2="1782.2" y2="834.00" stroke="#c2df23" stroke-width="4.17"/><line x1="165.0" y1="817.66" x2="189.0" y2="817.66" stroke="#86d549" stroke-width="4.17"/><line x1="224.0" y1="817.66" x2="286.9" y2="817.66" stroke="#86d549" stroke-width="4.17"/><line x1="312.0" y1="817.66" x2="340.9" y2="817.66" stroke="#86d549" stroke-width="4.17"/><line x1="365.9" y1="817.66" x2="493.0" y2="817.66" stroke="#86d549" stroke-width="4.17"/><line x1="508.0" y1="817.66" x2="653.8" y2="817.66" stroke="#86d549" stroke-width="4.17"/><line x1="704.1" y1="817.66" x2="737.9" y2="817.66" stroke="#86d549" stroke-width="4.17"/><line x1="772.8" y1="817.66" x2="846.0" y2="817.66" stroke="#86d549" stroke-width="4.17"/><line x1="870.9" y1="817.66" x2="987.9" y2="817.66" stroke="#86d549" stroke-width="4.17"/><line x1="1003.0" y1="817.66" x2="1017.0" y2="817.66" stroke="#86d549" stroke-width="4.17"/><line x1="1062.0" y1="817.66" x2="1212.9" y2="817.66" stroke="#86d549" stroke-width="4.17"/><line x1="1244.0" y1="817.66" x2="1266.9" y2="817.66" stroke="#86d549" stroke-width="4.17"/><line x1="1293.0" y1="817.66" x2="1315.9" y2="817.66" stroke="#86d549" stroke-width="4.17"/><line x1="1342.0" y1="817.66" x2="1364.9" y2="817.66" stroke="#86d549" stroke-width="4.17"/><line x1="1386.1" y1="817.66" x2="1428.9" y2="817.66" stroke="#86d549" stroke-width="4.17"/><line x1="1459.0" y1="817.66" x2="1482.9" y2="817.66" stroke="#86d549" stroke-width="4.17"/><line x1="1547.9" y1="817.66" x2="1570.8" y2="817.66" stroke="#86d549" stroke-width="4.17"/><line x1="165.0" y1="801.32" x2="189.0" y2="801.32" stroke="#52c569" stroke-width="4.17"/><line x1="258.0" y1="801.32" x2="487.9" y2="801.32" stroke="#52c569" stroke-width="4.17"/><line x1="508.0" y1="801.32" x2="614.9" y2="801.32" stroke="#52c569" stroke-width="4.17"/><line x1="626.0" y1="801.32" x2="717.9" y2="801.32" stroke="#52c569" stroke-width="4.17"/><line x1="729.0" y1="801.32" x2="825.9" y2="801.32" stroke="#52c569" stroke-width="4.17"/><line x1="948.9" y1="801.32" x2="1150.1" y2="801.32" stroke="#52c569" stroke-width="4.17"/><line x1="1160.0" y1="801.32" x2="1247.9" y2="801.32" stroke="#52c569" stroke-width="4.17"/><line x1="1258.0" y1="801.32" x2="1443.9" y2="801.32" stroke="#52c569" stroke-width="4.17"/><line x1="1459.0" y1="801.32" x2="1482.9" y2="801.32" stroke="#52c569" stroke-width="4.17"/><line x1="1552.9" y1="801.32" x2="1575.9" y2="801.32" stroke="#52c569" stroke-width="4.17"/><line x1="193.9" y1="784.98" x2="218.0" y2="784.98" stroke="#2ab07f" stroke-width="4.17"/><line x1="321.9" y1="784.98" x2="506.8" y2="784.98" stroke="#2ab07f" stroke-width="4.17"/><line x1="518.0" y1="784.98" x2="542.0" y2="784.98" stroke="#2ab07f" stroke-width="4.17"/><line x1="557.1" y1="784.98" x2="684.0" y2="784.98" stroke="#2ab07f" stroke-width="4.17"/><line x1="807.0" y1="784.98" x2="830.8" y2="784.98" stroke="#2ab07f" stroke-width="4.17"/><line x1="954.0" y1="784.98" x2="972.9" y2="784.98" stroke="#2ab07f" stroke-width="4.17"/><line x1="989.0" y1="784.98" x2="1125.0" y2="784.98" stroke="#2ab07f" stroke-width="4.17"/><line x1="1155.1" y1="784.98" x2="1217.9" y2="784.98" stroke="#2ab07f" stroke-width="4.17"/><line x1="1244.0" y1="784.98" x2="1266.9" y2="784.98" stroke="#2ab07f" stroke-width="4.17"/><line x1="1316.9" y1="784.98" x2="1341.0" y2="784.98" stroke="#2ab07f" stroke-width="4.17"/><line x1="1396.0" y1="784.98" x2="1419.0" y2="784.98" stroke="#2ab07f" stroke-width="4.17"/><line x1="1463.9" y1="784.98" x2="1650.0" y2="784.98" stroke="#2ab07f" stroke-width="4.17"/><line x1="340.9" y1="768.64" x2="370.0" y2="768.64" stroke="#1e9b8a" stroke-width="4.17"/><line x1="409.9" y1="768.64" x2="448.1" y2="768.64" stroke="#1e9b8a" stroke-width="4.17"/><line x1="468.8" y1="768.64" x2="493.0" y2="768.64" stroke="#1e9b8a" stroke-width="4.17"/><line x1="528.0" y1="768.64" x2="545.9" y2="768.64" stroke="#1e9b8a" stroke-width="4.17"/><line x1="562.0" y1="768.64" x2="590.9" y2="768.64" stroke="#1e9b8a" stroke-width="4.17"/><line x1="616.0" y1="768.64" x2="648.7" y2="768.64" stroke="#1e9b8a" stroke-width="4.17"/><line x1="958.9" y1="768.64" x2="987.9" y2="768.64" stroke="#1e9b8a" stroke-width="4.17"/><line x1="1062.0" y1="768.64" x2="1085.9" y2="768.64" stroke="#1e9b8a" stroke-width="4.17"/><line x1="1101.1" y1="768.64" x2="1125.0" y2="768.64" stroke="#1e9b8a" stroke-width="4.17"/><line x1="1160.0" y1="768.64" x2="1194.0" y2="768.64" stroke="#1e9b8a" stroke-width="4.17"/><line x1="1249.0" y1="768.64" x2="1272.0" y2="768.64" stroke="#1e9b8a" stroke-width="4.17"/><line x1="1425.0" y1="768.64" x2="1512.1" y2="768.64" stroke="#1e9b8a" stroke-width="4.17"/><line x1="419.9" y1="752.30" x2="443.9" y2="752.30" stroke="#25858e" stroke-width="4.17"/><line x1="532.9" y1="752.30" x2="555.9" y2="752.30" stroke="#25858e" stroke-width="4.17"/><line x1="566.9" y1="752.30" x2="590.9" y2="752.30" stroke="#25858e" stroke-width="4.17"/><line x1="620.9" y1="752.30" x2="743.0" y2="752.30" stroke="#25858e" stroke-width="4.17"/><line x1="968.8" y1="752.30" x2="1134.9" y2="752.30" stroke="#25858e" stroke-width="4.17"/><line x1="1185.1" y1="752.30" x2="1345.9" y2="752.30" stroke="#25858e" stroke-width="4.17"/><line x1="1469.1" y1="752.30" x2="1492.9" y2="752.30" stroke="#25858e" stroke-width="4.17"/><line x1="429.9" y1="735.96" x2="453.2" y2="735.96" stroke="#2d708e" stroke-width="4.17"/><line x1="576.9" y1="735.96" x2="733.2" y2="735.96" stroke="#2d708e" stroke-width="4.17"/><line x1="993.9" y1="735.96" x2="1104.9" y2="735.96" stroke="#2d708e" stroke-width="4.17"/><line x1="1116.0" y1="735.96" x2="1223.0" y2="735.96" stroke="#2d708e" stroke-width="4.17"/><line x1="1263.0" y1="735.96" x2="1292.0" y2="735.96" stroke="#2d708e" stroke-width="4.17"/><line x1="1489.0" y1="735.96" x2="1512.1" y2="735.96" stroke="#2d708e" stroke-width="4.17"/><line x1="592.0" y1="719.62" x2="614.9" y2="719.62" stroke="#38588c" stroke-width="4.17"/><line x1="654.9" y1="719.62" x2="772.1" y2="719.62" stroke="#38588c" stroke-width="4.17"/><line x1="1071.9" y1="719.62" x2="1243.0" y2="719.62" stroke="#38588c" stroke-width="4.17"/><line x1="1263.0" y1="719.62" x2="1286.9" y2="719.62" stroke="#38588c" stroke-width="4.17"/><line x1="595.8" y1="703.28" x2="733.2" y2="703.28" stroke="#433e85" stroke-width="4.17"/><line x1="1091.9" y1="703.28" x2="1119.9" y2="703.28" stroke="#433e85" stroke-width="4.17"/><line x1="1200.0" y1="703.28" x2="1223.0" y2="703.28" stroke="#433e85" stroke-width="4.17"/><line x1="1272.9" y1="703.28" x2="1325.8" y2="703.28" stroke="#433e85" stroke-width="4.17"/><line x1="1111.2" y1="686.94" x2="1134.9" y2="686.94" stroke="#482173" stroke-width="4.17"/><path d="M114.00,834.00 h7.6 M117.80,830.20 v7.6" stroke="#ffffff" stroke-width="2.08"/><text x="118.0" y="831.80" text-anchor="middle" fill="#ffffff" font-size="10.6">KSE</text><path d="M241.00,834.00 h7.6 M244.80,830.20 v7.6" stroke="#ffffff" stroke-width="2.08"/><text x="255.1" y="831.80" text-anchor="middle" fill="#ffffff" font-size="10.6">ETA</text><path d="M510.80,834.00 h7.6 M514.60,830.20 v7.6" stroke="#ffffff" stroke-width="2.08"/><text x="495.5" y="831.80" text-anchor="middle" fill="#ffffff" font-size="10.6">NZC</text><path d="M707.10,834.00 h7.6 M710.90,830.20 v7.6" stroke="#ffffff" stroke-width="2.08"/><text x="711.5" y="831.80" text-anchor="middle" fill="#ffffff" font-size="10.6">NDA</text><path d="M833.70,834.00 h7.6 M837.50,830.20 v7.6" stroke="#ffffff" stroke-width="2.08"/><text x="853.4" y="831.80" text-anchor="middle" fill="#ffffff" font-size="10.6">SPE</text><path d="M962.10,834.00 h7.6 M965.90,830.20 v7.6" stroke="#ffffff" stroke-width="2.08"/><text x="946.5" y="831.80" text-anchor="middle" fill="#ffffff" font-size="10.6">ARD</text><path d="M987.10,834.00 h7.6 M990.90,830.20 v7.6" stroke="#ffffff" stroke-width="2.08"/><text x="1025.0" y="831.80" text-anchor="middle" fill="#ffffff" font-size="10.6">EGE</text><path d="M1116.90,834.00 h7.6 M1120.70,830.20 v7.6" stroke="#ffffff" stroke-width="2.08"/><text x="1143.0" y="831.80" text-anchor="middle" fill="#ffffff" font-size="10.6">NTA</text><path d="M1296.20,834.00 h7.6 M1300.00,830.20 v7.6" stroke="#ffffff" stroke-width="2.08"/><text x="1284.9" y="831.80" text-anchor="middle" fill="#ffffff" font-size="10.6">MON</text><path d="M1342.10,834.00 h7.6 M1345.90,830.20 v7.6" stroke="#ffffff" stroke-width="2.08"/><text x="1346.5" y="831.80" text-anchor="middle" fill="#ffffff" font-size="10.6">URS</text><path d="M1412.80,834.00 h7.6 M1416.60,830.20 v7.6" stroke="#ffffff" stroke-width="2.08"/><text x="1412.5" y="831.80" text-anchor="middle" fill="#ffffff" font-size="10.6">AHY</text><path d="M1481.90,834.00 h7.6 M1485.70,830.20 v7.6" stroke="#ffffff" stroke-width="2.08"/><text x="1485.5" y="831.80" text-anchor="middle" fill="#ffffff" font-size="10.6">GUM</text><path d="M1531.10,834.00 h7.6 M1534.90,830.20 v7.6" stroke="#ffffff" stroke-width="2.08"/><text x="1535.0" y="831.80" text-anchor="middle" fill="#ffffff" font-size="10.6">OHY</text><path d="M1732.30,834.00 h7.6 M1736.10,830.20 v7.6" stroke="#ffffff" stroke-width="2.08"/><text x="1736.0" y="831.80" text-anchor="middle" fill="#ffffff" font-size="10.6">XHE</text><path d="M1766.20,834.00 h7.6 M1770.00,830.20 v7.6" stroke="#ffffff" stroke-width="2.08"/><text x="1770.1" y="831.80" text-anchor="middle" fill="#ffffff" font-size="10.6">EVI</text><path d="M172.90,817.66 h7.6 M176.70,813.86 v7.6" stroke="#ffffff" stroke-width="2.08"/><text x="177.0" y="815.46" text-anchor="middle" fill="#ffffff" font-size="10.6">AVB</text><path d="M256.10,817.66 h7.6 M259.90,813.86 v7.6" stroke="#ffffff" stroke-width="2.08"/><text x="255.4" y="815.46" text-anchor="middle" fill="#ffffff" font-size="10.6">ELY</text><path d="M324.10,817.66 h7.6 M327.90,813.86 v7.6" stroke="#ffffff" stroke-width="2.08"/><text x="326.4" y="815.46" text-anchor="middle" fill="#ffffff" font-size="10.6">CAM</text><path d="M438.00,817.66 h7.6 M441.80,813.86 v7.6" stroke="#ffffff" stroke-width="2.08"/><text x="429.4" y="815.46" text-anchor="middle" fill="#ffffff" font-size="10.6">SSG</text><path d="M599.00,817.66 h7.6 M602.80,813.86 v7.6" stroke="#ffffff" stroke-width="2.08"/><text x="580.9" y="815.46" text-anchor="middle" fill="#ffffff" font-size="10.6">PCA</text><path d="M716.70,817.66 h7.6 M720.50,813.86 v7.6" stroke="#ffffff" stroke-width="2.08"/><text x="721.0" y="815.46" text-anchor="middle" fill="#ffffff" font-size="10.6">AUD</text><path d="M794.00,817.66 h7.6 M797.80,813.86 v7.6" stroke="#ffffff" stroke-width="2.08"/><text x="809.4" y="815.46" text-anchor="middle" fill="#ffffff" font-size="10.6">AUR</text><path d="M939.80,817.66 h7.6 M943.60,813.86 v7.6" stroke="#ffffff" stroke-width="2.08"/><text x="929.4" y="815.46" text-anchor="middle" fill="#ffffff" font-size="10.6">DSX</text><path d="M1006.00,817.66 h7.6 M1009.80,813.86 v7.6" stroke="#ffffff" stroke-width="2.08"/><text x="1010.0" y="815.46" text-anchor="middle" fill="#ffffff" font-size="10.6">OCU</text><path d="M1152.90,817.66 h7.6 M1156.70,813.86 v7.6" stroke="#ffffff" stroke-width="2.08"/><text x="1137.5" y="815.46" text-anchor="middle" fill="#ffffff" font-size="10.6">OER</text><path d="M1251.10,817.66 h7.6 M1254.90,813.86 v7.6" stroke="#ffffff" stroke-width="2.08"/><text x="1255.5" y="815.46" text-anchor="middle" fill="#ffffff" font-size="10.6">DKD</text><path d="M1299.90,817.66 h7.6 M1303.70,813.86 v7.6" stroke="#ffffff" stroke-width="2.08"/><text x="1304.5" y="815.46" text-anchor="middle" fill="#ffffff" font-size="10.6">DSV</text><path d="M1349.80,817.66 h7.6 M1353.60,813.86 v7.6" stroke="#ffffff" stroke-width="2.08"/><text x="1353.5" y="815.46" text-anchor="middle" fill="#ffffff" font-size="10.6">ALY</text><path d="M1403.10,817.66 h7.6 M1406.90,813.86 v7.6" stroke="#ffffff" stroke-width="2.08"/><text x="1407.5" y="815.46" text-anchor="middle" fill="#ffffff" font-size="10.6">ILE</text><path d="M1466.90,817.66 h7.6 M1470.70,813.86 v7.6" stroke="#ffffff" stroke-width="2.08"/><text x="1471.0" y="815.46" text-anchor="middle" fill="#ffffff" font-size="10.6">SCC</text><path d="M1555.00,817.66 h7.6 M1558.80,813.86 v7.6" stroke="#ffffff" stroke-width="2.08"/><text x="1559.3" y="815.46" text-anchor="middle" fill="#ffffff" font-size="10.6">FEV</text><path d="M175.10,801.32 h7.6 M178.90,797.52 v7.6" stroke="#ffffff" stroke-width="2.08"/><text x="177.0" y="799.12" text-anchor="middle" fill="#ffffff" font-size="10.6">LYR</text><path d="M379.10,801.32 h7.6 M382.90,797.52 v7.6" stroke="#ffffff" stroke-width="2.08"/><text x="372.9" y="799.12" text-anchor="middle" fill="#ffffff" font-size="10.6">JMC</text><path d="M545.00,801.32 h7.6 M548.80,797.52 v7.6" stroke="#ffffff" stroke-width="2.08"/><text x="561.5" y="799.12" text-anchor="middle" fill="#ffffff" font-size="10.6">JPE</text><path d="M683.10,801.32 h7.6 M686.90,797.52 v7.6" stroke="#ffffff" stroke-width="2.08"/><text x="672.0" y="799.12" text-anchor="middle" fill="#ffffff" font-size="10.6">PAU</text><path d="M742.00,801.32 h7.6 M745.80,797.52 v7.6" stroke="#ffffff" stroke-width="2.08"/><text x="777.5" y="799.12" text-anchor="middle" fill="#ffffff" font-size="10.6">NIA</text><path d="M1075.10,801.32 h7.6 M1078.90,797.52 v7.6" stroke="#ffffff" stroke-width="2.08"/><text x="1049.5" y="799.12" text-anchor="middle" fill="#ffffff" font-size="10.6">STA</text><path d="M1217.00,801.32 h7.6 M1220.80,797.52 v7.6" stroke="#ffffff" stroke-width="2.08"/><text x="1204.0" y="799.12" text-anchor="middle" fill="#ffffff" font-size="10.6">NOO</text><path d="M1304.90,801.32 h7.6 M1308.70,797.52 v7.6" stroke="#ffffff" stroke-width="2.08"/><text x="1351.0" y="799.12" text-anchor="middle" fill="#ffffff" font-size="10.6">COM</text><path d="M1466.90,801.32 h7.6 M1470.70,797.52 v7.6" stroke="#ffffff" stroke-width="2.08"/><text x="1471.0" y="799.12" text-anchor="middle" fill="#ffffff" font-size="10.6">NCC</text><path d="M1560.00,801.32 h7.6 M1563.80,797.52 v7.6" stroke="#ffffff" stroke-width="2.08"/><text x="1564.4" y="799.12" text-anchor="middle" fill="#ffffff" font-size="10.6">FED</text><path d="M202.00,784.98 h7.6 M205.80,781.18 v7.6" stroke="#ffffff" stroke-width="2.08"/><text x="205.9" y="782.78" text-anchor="middle" fill="#ffffff" font-size="10.6">HVI</text><path d="M400.80,784.98 h7.6 M404.60,781.18 v7.6" stroke="#ffffff" stroke-width="2.08"/><text x="414.4" y="782.78" text-anchor="middle" fill="#ffffff" font-size="10.6">ARI</text><path d="M525.90,784.98 h7.6 M529.70,781.18 v7.6" stroke="#ffffff" stroke-width="2.08"/><text x="530.0" y="782.78" text-anchor="middle" fill="#ffffff" font-size="10.6">SZC</text><path d="M639.10,784.98 h7.6 M642.90,781.18 v7.6" stroke="#ffffff" stroke-width="2.08"/><text x="620.5" y="782.78" text-anchor="middle" fill="#ffffff" font-size="10.6">CAP</text><path d="M815.10,784.98 h7.6 M818.90,781.18 v7.6" stroke="#ffffff" stroke-width="2.08"/><text x="818.9" y="782.78" text-anchor="middle" fill="#ffffff" font-size="10.6">NUE</text><path d="M959.90,784.98 h7.6 M963.70,781.18 v7.6" stroke="#ffffff" stroke-width="2.08"/><text x="963.5" y="782.78" text-anchor="middle" fill="#ffffff" font-size="10.6">OCT</text><path d="M1041.00,784.98 h7.6 M1044.80,781.18 v7.6" stroke="#ffffff" stroke-width="2.08"/><text x="1057.0" y="782.78" text-anchor="middle" fill="#ffffff" font-size="10.6">ORI</text><path d="M1188.10,784.98 h7.6 M1191.90,781.18 v7.6" stroke="#ffffff" stroke-width="2.08"/><text x="1186.5" y="782.78" text-anchor="middle" fill="#ffffff" font-size="10.6">AMO</text><path d="M1251.10,784.98 h7.6 M1254.90,781.18 v7.6" stroke="#ffffff" stroke-width="2.08"/><text x="1255.5" y="782.78" text-anchor="middle" fill="#ffffff" font-size="10.6">DPC</text><path d="M1325.10,784.98 h7.6 M1328.90,781.18 v7.6" stroke="#ffffff" stroke-width="2.08"/><text x="1329.0" y="782.78" text-anchor="middle" fill="#ffffff" font-size="10.6">XVI</text><path d="M1403.10,784.98 h7.6 M1406.90,781.18 v7.6" stroke="#ffffff" stroke-width="2.08"/><text x="1407.5" y="782.78" text-anchor="middle" fill="#ffffff" font-size="10.6">QUA</text><path d="M1546.00,784.98 h7.6 M1549.80,781.18 v7.6" stroke="#ffffff" stroke-width="2.08"/><text x="1557.0" y="782.78" text-anchor="middle" fill="#ffffff" font-size="10.6">AAN</text><path d="M356.00,768.64 h7.6 M359.80,764.84 v7.6" stroke="#ffffff" stroke-width="2.08"/><text x="355.4" y="766.44" text-anchor="middle" fill="#ffffff" font-size="10.6">TAH</text><path d="M427.10,768.64 h7.6 M430.90,764.84 v7.6" stroke="#ffffff" stroke-width="2.08"/><text x="429.0" y="766.44" text-anchor="middle" fill="#ffffff" font-size="10.6">JEA</text><path d="M477.10,768.64 h7.6 M480.90,764.84 v7.6" stroke="#ffffff" stroke-width="2.08"/><text x="480.9" y="766.44" text-anchor="middle" fill="#ffffff" font-size="10.6">JIP</text><path d="M535.90,768.64 h7.6 M539.70,764.84 v7.6" stroke="#ffffff" stroke-width="2.08"/><text x="537.0" y="766.44" text-anchor="middle" fill="#ffffff" font-size="10.6">PPS</text><path d="M571.00,768.64 h7.6 M574.80,764.84 v7.6" stroke="#ffffff" stroke-width="2.08"/><text x="576.5" y="766.44" text-anchor="middle" fill="#ffffff" font-size="10.6">ZCS</text><path d="M630.70,768.64 h7.6 M634.50,764.84 v7.6" stroke="#ffffff" stroke-width="2.08"/><text x="632.4" y="766.44" text-anchor="middle" fill="#ffffff" font-size="10.6">GDR</text><path d="M974.00,768.64 h7.6 M977.80,764.84 v7.6" stroke="#ffffff" stroke-width="2.08"/><text x="973.4" y="766.44" text-anchor="middle" fill="#ffffff" font-size="10.6">DRA</text><path d="M1069.80,768.64 h7.6 M1073.60,764.84 v7.6" stroke="#ffffff" stroke-width="2.08"/><text x="1074.0" y="766.44" text-anchor="middle" fill="#ffffff" font-size="10.6">LUM</text><path d="M1108.90,768.64 h7.6 M1112.70,764.84 v7.6" stroke="#ffffff" stroke-width="2.08"/><text x="1113.0" y="766.44" text-anchor="middle" fill="#ffffff" font-size="10.6">RPU</text><path d="M1178.10,768.64 h7.6 M1181.90,764.84 v7.6" stroke="#ffffff" stroke-width="2.08"/><text x="1177.0" y="766.44" text-anchor="middle" fill="#ffffff" font-size="10.6">THA</text><path d="M1255.90,768.64 h7.6 M1259.70,764.84 v7.6" stroke="#ffffff" stroke-width="2.08"/><text x="1260.5" y="766.44" text-anchor="middle" fill="#ffffff" font-size="10.6">PSU</text><path d="M1466.90,768.64 h7.6 M1470.70,764.84 v7.6" stroke="#ffffff" stroke-width="2.08"/><text x="1468.5" y="766.44" text-anchor="middle" fill="#ffffff" font-size="10.6">XCB</text><path d="M428.00,752.30 h7.6 M431.80,748.50 v7.6" stroke="#ffffff" stroke-width="2.08"/><text x="431.9" y="750.10" text-anchor="middle" fill="#ffffff" font-size="10.6">JRC</text><path d="M540.10,752.30 h7.6 M543.90,748.50 v7.6" stroke="#ffffff" stroke-width="2.08"/><text x="544.4" y="750.10" text-anchor="middle" fill="#ffffff" font-size="10.6">CAN</text><path d="M574.80,752.30 h7.6 M578.60,748.50 v7.6" stroke="#ffffff" stroke-width="2.08"/><text x="578.9" y="750.10" text-anchor="middle" fill="#ffffff" font-size="10.6">FAN</text><path d="M704.00,752.30 h7.6 M707.80,748.50 v7.6" stroke="#ffffff" stroke-width="2.08"/><text x="682.0" y="750.10" text-anchor="middle" fill="#ffffff" font-size="10.6">PER</text><path d="M1094.90,752.30 h7.6 M1098.70,748.50 v7.6" stroke="#ffffff" stroke-width="2.08"/><text x="1051.8" y="750.10" text-anchor="middle" fill="#ffffff" font-size="10.6">CTA</text><path d="M1270.90,752.30 h7.6 M1274.70,748.50 v7.6" stroke="#ffffff" stroke-width="2.08"/><text x="1265.5" y="750.10" text-anchor="middle" fill="#ffffff" font-size="10.6">HYD</text><path d="M1477.00,752.30 h7.6 M1480.80,748.50 v7.6" stroke="#ffffff" stroke-width="2.08"/><text x="1481.0" y="750.10" text-anchor="middle" fill="#ffffff" font-size="10.6">XUM</text><path d="M438.00,735.96 h7.6 M441.80,732.16 v7.6" stroke="#ffffff" stroke-width="2.08"/><text x="441.5" y="733.76" text-anchor="middle" fill="#ffffff" font-size="10.6">COR</text><path d="M630.70,735.96 h7.6 M634.50,732.16 v7.6" stroke="#ffffff" stroke-width="2.08"/><text x="655.0" y="733.76" text-anchor="middle" fill="#ffffff" font-size="10.6">SDA</text><path d="M1039.10,735.96 h7.6 M1042.90,732.16 v7.6" stroke="#ffffff" stroke-width="2.08"/><text x="1049.4" y="733.76" text-anchor="middle" fill="#ffffff" font-size="10.6">LMI</text><path d="M1168.00,735.96 h7.6 M1171.80,732.16 v7.6" stroke="#ffffff" stroke-width="2.08"/><text x="1169.5" y="733.76" text-anchor="middle" fill="#ffffff" font-size="10.6">LEO</text><path d="M1275.00,735.96 h7.6 M1278.80,732.16 v7.6" stroke="#ffffff" stroke-width="2.08"/><text x="1277.5" y="733.76" text-anchor="middle" fill="#ffffff" font-size="10.6">EHY</text><path d="M1497.00,735.96 h7.6 M1500.80,732.16 v7.6" stroke="#ffffff" stroke-width="2.08"/><text x="1500.5" y="733.76" text-anchor="middle" fill="#ffffff" font-size="10.6">ECV</text><path d="M599.00,719.62 h7.6 M602.80,715.82 v7.6" stroke="#ffffff" stroke-width="2.08"/><text x="603.5" y="717.42" text-anchor="middle" fill="#ffffff" font-size="10.6">JXA</text><path d="M727.10,719.62 h7.6 M730.90,715.82 v7.6" stroke="#ffffff" stroke-width="2.08"/><text x="713.5" y="717.42" text-anchor="middle" fill="#ffffff" font-size="10.6">KCG</text><path d="M1188.10,719.62 h7.6 M1191.90,715.82 v7.6" stroke="#ffffff" stroke-width="2.08"/><text x="1157.5" y="717.42" text-anchor="middle" fill="#ffffff" font-size="10.6">AND</text><path d="M1271.10,719.62 h7.6 M1274.90,715.82 v7.6" stroke="#ffffff" stroke-width="2.08"/><text x="1275.0" y="717.42" text-anchor="middle" fill="#ffffff" font-size="10.6">DAD</text><path d="M688.00,703.28 h7.6 M691.80,699.48 v7.6" stroke="#ffffff" stroke-width="2.08"/><text x="664.5" y="701.08" text-anchor="middle" fill="#ffffff" font-size="10.6">ERI</text><path d="M1102.30,703.28 h7.6 M1106.10,699.48 v7.6" stroke="#ffffff" stroke-width="2.08"/><text x="1105.9" y="701.08" text-anchor="middle" fill="#ffffff" font-size="10.6">SLD</text><path d="M1206.90,703.28 h7.6 M1210.70,699.48 v7.6" stroke="#ffffff" stroke-width="2.08"/><text x="1211.5" y="701.08" text-anchor="middle" fill="#ffffff" font-size="10.6">ORS</text><path d="M1299.90,703.28 h7.6 M1303.70,699.48 v7.6" stroke="#ffffff" stroke-width="2.08"/><text x="1299.3" y="701.08" text-anchor="middle" fill="#ffffff" font-size="10.6">GEM</text><path d="M1119.20,686.94 h7.6 M1123.00,683.14 v7.6" stroke="#ffffff" stroke-width="2.08"/><text x="1123.1" y="684.74" text-anchor="middle" fill="#ffffff" font-size="10.6">KUM</text><rect x="20.44" y="641.60" width="1764.96" height="200.70" fill="none" stroke="#ffffff" stroke-width="1.11"/><line x1="20.44" y1="842.30" x2="20.44" y2="847.16" stroke="#ffffff" stroke-width="1.11"/><text x="20.44" y="862" text-anchor="middle" fill="#ffffff" font-size="14">0</text><line x1="265.57" y1="842.30" x2="265.57" y2="847.16" stroke="#ffffff" stroke-width="1.11"/><text x="265.57" y="862" text-anchor="middle" fill="#ffffff" font-size="14">50</text><line x1="510.71" y1="842.30" x2="510.71" y2="847.16" stroke="#ffffff" stroke-width="1.11"/><text x="510.71" y="862" text-anchor="middle" fill="#ffffff" font-size="14">100</text><line x1="755.84" y1="842.30" x2="755.84" y2="847.16" stroke="#ffffff" stroke-width="1.11"/><text x="755.84" y="862" text-anchor="middle" fill="#ffffff" font-size="14">150</text><line x1="1000.97" y1="842.30" x2="1000.97" y2="847.16" stroke="#ffffff" stroke-width="1.11"/><text x="1000.97" y="862" text-anchor="middle" fill="#ffffff" font-size="14">200</text><line x1="1246.11" y1="842.30" x2="1246.11" y2="847.16" stroke="#ffffff" stroke-width="1.11"/><text x="1246.11" y="862" text-anchor="middle" fill="#ffffff" font-size="14">250</text><line x1="1491.24" y1="842.30" x2="1491.24" y2="847.16" stroke="#ffffff" stroke-width="1.11"/><text x="1491.24" y="862" text-anchor="middle" fill="#ffffff" font-size="14">300</text><line x1="1736.37" y1="842.30" x2="1736.37" y2="847.16" stroke="#ffffff" stroke-width="1.11"/><text x="1736.37" y="862" text-anchor="middle" fill="#ffffff" font-size="14">350</text><text x="902.9" y="882" text-anchor="middle" fill="#ffffff" font-size="14">Solar longitude (deg)</text></g></svg></body></html>
